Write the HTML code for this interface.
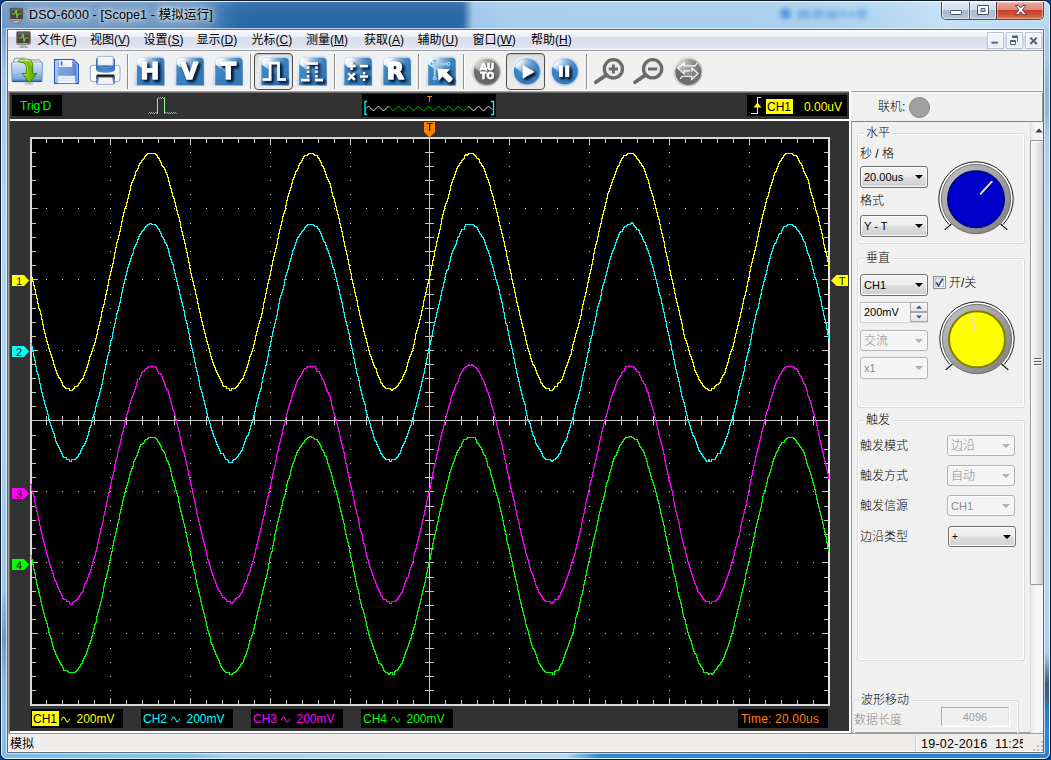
<!DOCTYPE html>
<html lang="zh-CN">
<head>
<meta charset="utf-8">
<title>DSO-6000 - [Scope1 - 模拟运行]</title>
<style>
*{box-sizing:border-box;margin:0;padding:0}
html,body{width:1051px;height:760px;overflow:hidden;background:#0b438f}
body{position:relative;font-family:"Liberation Sans","Noto Sans CJK SC",sans-serif;font-size:12px;color:#000}
div,span,svg{position:absolute}
u{text-underline-offset:1px}
.t{white-space:nowrap;line-height:1}
.ui{font-family:"Liberation Sans","Noto Sans CJK SC",sans-serif;font-size:12px}
.song{font-family:"Liberation Sans","Noto Sans CJK SC",sans-serif;font-size:12px;font-weight:300}
.ar{font-family:"Liberation Sans",sans-serif;font-size:13px}
.tsep{width:2px;height:34px;border-left:1px solid #8e8e8e;border-right:1px solid #fdfdfd}
.combo{border:1px solid #707070;border-radius:3px;background:linear-gradient(180deg,#f3f3f3 0,#ececec 48%,#dedede 52%,#d0d0d0 100%);box-shadow:inset 0 0 0 1px #fcfcfc}
.combo.dis{border-color:#adb2b5;background:#f4f4f4;box-shadow:inset 0 0 0 1px #fcfcfc}
.arrow{width:0;height:0;border-left:4px solid transparent;border-right:4px solid transparent;border-top:4px solid #000}
.arrow.dis{border-top-color:#b0b0b0}
.grp{border:1px solid #d5dfe5;border-radius:3px;box-shadow:inset 0 0 0 1px #fff, 0 0 0 0 #fff}
.grplabel{background:#f0f0f0;padding:0 2px}
</style>
</head>
<body>
<div id="frame" style="left:0;top:0;width:1051px;height:760px;border-radius:7px 7px 6px 6px;background:#0d1828;overflow:hidden">
<div style="left:1px;top:1px;width:1049px;height:758px;border-radius:6px;overflow:hidden;background:linear-gradient(90deg,#7099c4 0,#6e98c3 120px,#6893c0 185px,#5c8bbb 203px,#4a7fb5 214px,#3672ad 225px,#2b69a7 238px,#2866a5 255px,#2866a5 455px,#2b69a8 462px,#9fc8e8 472px,#a9cfec 520px,#abd0ee 800px,#b4d6f1 880px,#c6e0f6 945px,#b8d8f2 100%)">
<div style="left:0;top:27px;width:7px;height:731px;background:linear-gradient(180deg,#7aa3cd 0,#a4c9ec 50px,#b1d3f1 200px,#acd0f0 400px,#9cc6ea 560px,#6f97bd 610px,#8ab4da 650px,#86c1e8 700px,#7cbde6 100%)"></div>
<div style="left:1042px;top:27px;width:7px;height:731px;background:linear-gradient(180deg,#abd0ec 0,#a4cbea 30px,#8fbbe0 50px,#8ab7de 85px,#a9cfee 110px,#b2d5f3 220px,#b4d7f4 560px,#a9cfee 625px,#5d83aa 645px,#3a5c84 655px,#3c628c 668px,#2f7dc0 682px,#2f86cc 700px,#2d84ca 100%)"></div>
<div style="left:0;top:751px;width:1049px;height:7px;background:linear-gradient(90deg,#78bde6 0,#84c4ea 190px,#a6d2f2 225px,#b2d9f6 400px,#b4daf6 565px,#6fb0e2 582px,#3388ce 598px,#2f86cc 700px,#2b81c9 100%)"></div>
<div style="left:0;top:0;width:1049px;height:28px;background:linear-gradient(180deg,rgba(255,255,255,.10) 0,rgba(255,255,255,.02) 40%,rgba(255,255,255,0) 100%)"></div>
<div style="left:0;top:0;width:1049px;height:758px;border-radius:6px;border:1px solid rgba(240,248,255,.92)"></div>
<div style="left:796px;top:8px;width:70px;height:11px;opacity:.72;filter:blur(2px)"><div style="left:0;top:1px;width:13px;height:9px;background:rgba(70,140,215,.62)"></div><div style="left:15px;top:0;width:12px;height:10px;background:rgba(70,140,215,.55)"></div><div style="left:29px;top:1px;width:12px;height:9px;background:rgba(70,140,215,.62)"></div><div style="left:43px;top:1px;width:7px;height:8px;background:rgba(70,140,215,.5)"></div><div style="left:52px;top:2px;width:6px;height:7px;background:rgba(70,140,215,.55)"></div><div style="left:60px;top:0;width:10px;height:10px;background:rgba(70,140,215,.6)"></div></div>
<div style="left:779px;top:7px;width:11px;height:11px;border-radius:5px;background:rgba(50,135,220,.7);filter:blur(1.9px)"></div>
</div>
<div style="left:7px;top:29px;width:1037px;height:724px;border:1px solid #5b6a7b;background:#f0f0f0"></div>
<div style="left:6px;top:28px;width:1039px;height:726px;border:1px solid rgba(235,245,255,.75);border-radius:1px;pointer-events:none"></div>
</div>
<svg style="left:9px;top:7px" width="16" height="17" viewBox="0 0 16 17"><defs><linearGradient id="scr" x1="0" y1="0" x2="0" y2="1"><stop offset="0" stop-color="#6c6c6c"/><stop offset=".5" stop-color="#3a3a3a"/><stop offset="1" stop-color="#4a4a4a"/></linearGradient></defs><rect x="0.5" y="0.5" width="14" height="13" rx="1" fill="#d9d7d4" stroke="#8a8783"/><rect x="1.5" y="1.5" width="12" height="10.5" fill="url(#scr)" stroke="#2a2a2a" stroke-width=".6"/><path d="M2.5 7H5.5L6.3 5.6L7.3 3L8 10.8L8.8 7.6L9.5 7H12.5" fill="none" stroke="#86c232" stroke-width="1.2" stroke-linejoin="round"/><rect x="12" y="12" width="1.3" height="1.2" fill="#e03050"/><path d="M5.5 14H9.5L10 15.5H5Z" fill="#c9c7c4"/><rect x="3.2" y="15.4" width="8.6" height="1.2" rx=".6" fill="#7c7a78"/></svg>
<div class="t" style="left:29px;top:7px;font-size:12.5px;letter-spacing:.12px;line-height:16px;color:#000;text-shadow:0 0 5px #fff,0 0 9px rgba(255,255,255,.85),0 0 14px rgba(255,255,255,.6)">DSO-6000 - [Scope1 - 模拟运行]</div>
<div style="left:941px;top:2px;width:103px;height:18px;border:1px solid #3b4a5c;border-top:none;border-radius:0 0 5px 5px;overflow:hidden;box-shadow:0 0 2px rgba(255,255,255,.7)">
<div style="left:0;top:0;width:27px;height:17px;background:linear-gradient(180deg,#dce9f5 0,#cfdfee 45%,#a8bdd3 50%,#b1c5da 100%);box-shadow:inset 0 0 0 1px rgba(255,255,255,.55)"></div>
<div style="left:27px;top:0;width:1px;height:17px;background:#47576a"></div>
<div style="left:28px;top:0;width:26px;height:17px;background:linear-gradient(180deg,#dce9f5 0,#cfdfee 45%,#a8bdd3 50%,#b1c5da 100%);box-shadow:inset 0 0 0 1px rgba(255,255,255,.55)"></div>
<div style="left:54px;top:0;width:1px;height:17px;background:#5a2a26"></div>
<div style="left:55px;top:0;width:46px;height:17px;background:linear-gradient(180deg,#eaa9a0 0,#de8679 45%,#c5412c 50%,#cf5236 75%,#dd7652 100%);box-shadow:inset 0 0 0 1px rgba(255,220,210,.5)"></div>
</div>
<svg style="left:941px;top:0" width="103" height="20" viewBox="0 0 103 20"><rect x="9.5" y="10.5" width="11" height="4" rx=".8" fill="#fff" stroke="#47556a"/><path d="M36.5 5.500H47.500V14.500H36.500Z M40 8.500V11.500H44V8.500Z" fill="#fff" fill-rule="evenodd" stroke="#47556a"/><path d="M74.300 5.400H77.600L79.700 8.100L81.800 5.400H85.100L81.400 9.900L85.300 14.600H81.900L79.700 11.800L77.500 14.600H74.100L78 9.900Z" fill="#fff" stroke="#5c3832" stroke-width=".9" stroke-linejoin="round"/></svg>
<div style="left:8px;top:30px;width:1035px;height:20px;background:linear-gradient(180deg,#ffffff 0,#f7f8fc 2px,#eaedf7 7px,#d9ddec 7px,#dbdfee 13px,#e3e6f3 18px,#eef0f8 19px,#f5f6fb 20px)"></div>
<div style="left:8px;top:50px;width:1035px;height:1px;background:#a0a0a0"></div>
<svg style="left:16px;top:31px" width="16" height="17" viewBox="0 0 16 17"><defs><linearGradient id="scr" x1="0" y1="0" x2="0" y2="1"><stop offset="0" stop-color="#6c6c6c"/><stop offset=".5" stop-color="#3a3a3a"/><stop offset="1" stop-color="#4a4a4a"/></linearGradient></defs><rect x="0.5" y="0.5" width="14" height="13" rx="1" fill="#d9d7d4" stroke="#8a8783"/><rect x="1.5" y="1.5" width="12" height="10.5" fill="url(#scr)" stroke="#2a2a2a" stroke-width=".6"/><path d="M2.5 7H5.5L6.3 5.6L7.3 3L8 10.8L8.8 7.6L9.5 7H12.5" fill="none" stroke="#86c232" stroke-width="1.2" stroke-linejoin="round"/><rect x="12" y="12" width="1.3" height="1.2" fill="#e03050"/><path d="M5.5 14H9.5L10 15.5H5Z" fill="#c9c7c4"/><rect x="3.2" y="15.4" width="8.6" height="1.2" rx=".6" fill="#7c7a78"/></svg>
<div class="t ui" style="left:37.5px;top:32px;line-height:16px">文件(<u>F</u>)</div>
<div class="t ui" style="left:90px;top:32px;line-height:16px">视图(<u>V</u>)</div>
<div class="t ui" style="left:143.5px;top:32px;line-height:16px">设置(<u>S</u>)</div>
<div class="t ui" style="left:196.5px;top:32px;line-height:16px">显示(<u>D</u>)</div>
<div class="t ui" style="left:251.5px;top:32px;line-height:16px">光标(<u>C</u>)</div>
<div class="t ui" style="left:306px;top:32px;line-height:16px">测量(<u>M</u>)</div>
<div class="t ui" style="left:364px;top:32px;line-height:16px">获取(<u>A</u>)</div>
<div class="t ui" style="left:417.5px;top:32px;line-height:16px">辅助(<u>U</u>)</div>
<div class="t ui" style="left:472.5px;top:32px;line-height:16px">窗口(<u>W</u>)</div>
<div class="t ui" style="left:531px;top:32px;line-height:16px">帮助(<u>H</u>)</div>
<div style="left:987px;top:32px;width:17px;height:17px;border:1px solid #b5c4d8;background:linear-gradient(180deg,#f3f7fb 0,#e3ebf5 100%);box-shadow:inset 0 0 0 1px rgba(255,255,255,.7)"></div>
<div style="left:1005.5px;top:32px;width:17px;height:17px;border:1px solid #b5c4d8;background:linear-gradient(180deg,#f3f7fb 0,#e3ebf5 100%);box-shadow:inset 0 0 0 1px rgba(255,255,255,.7)"></div>
<div style="left:1024.5px;top:32px;width:17px;height:17px;border:1px solid #b5c4d8;background:linear-gradient(180deg,#f3f7fb 0,#e3ebf5 100%);box-shadow:inset 0 0 0 1px rgba(255,255,255,.7)"></div>
<svg style="left:987px;top:32px" width="56" height="17" viewBox="0 0 56 17"><rect x="4.500" y="9.700" width="6.300" height="1.900" fill="#566173"/><path d="M25.5 5.500H30.500V9.500M23.500 8.500H28.500V12.500H23.500Z M23.500 9.500H28.500" fill="none" stroke="#566173" stroke-width="1"/><path d="M25 4.500H31" stroke="#566173" stroke-width="2"/><path d="M43.300 5.600L49.800 12M49.800 5.600L43.300 12" stroke="#566173" stroke-width="2"/></svg>
<div style="left:8px;top:51px;width:1035px;height:39px;background:#f0f0f0"></div>
<div style="left:8px;top:90px;width:1035px;height:1px;background:#f9f9f9"></div>
<div style="left:254px;top:53px;width:39px;height:37px;border:1px solid #4f4f4f;border-radius:4px;background:linear-gradient(180deg,#dcdcdc 0,#e6e6e6 40%,#ebebeb 100%);box-shadow:inset 0 1px 1px rgba(0,0,0,.12)"></div>
<div style="left:506px;top:53px;width:39px;height:37px;border:1px solid #4f4f4f;border-radius:4px;background:linear-gradient(180deg,#dcdcdc 0,#e6e6e6 40%,#ebebeb 100%);box-shadow:inset 0 1px 1px rgba(0,0,0,.12)"></div>
<div class="tsep" style="left:127px;top:54px;width:2px;height:35px;"></div>
<div class="tsep" style="left:250px;top:54px;width:2px;height:35px;"></div>
<div class="tsep" style="left:334px;top:54px;width:2px;height:35px;"></div>
<div class="tsep" style="left:418px;top:54px;width:2px;height:35px;"></div>
<div class="tsep" style="left:463px;top:54px;width:2px;height:35px;"></div>
<div class="tsep" style="left:586px;top:54px;width:2px;height:35px;"></div>
<svg style="left:8px;top:51px" width="1035" height="40" viewBox="8 51 1035 40">
<defs>
<linearGradient id="tb" x1="0" y1="0" x2="1" y2="1"><stop offset="0" stop-color="#4a8fca"/><stop offset=".5" stop-color="#3a80bd"/><stop offset="1" stop-color="#2f72ae"/></linearGradient>
<linearGradient id="tg" x1="0" y1="0" x2=".9" y2=".8"><stop offset="0" stop-color="#fff" stop-opacity=".98"/><stop offset=".35" stop-color="#dcebf7" stop-opacity=".85"/><stop offset=".8" stop-color="#7db0db" stop-opacity=".55"/><stop offset="1" stop-color="#4a8dc8" stop-opacity=".2"/></linearGradient>
<radialGradient id="cb" cx=".45" cy=".4" r=".7"><stop offset="0" stop-color="#3f8ccc"/><stop offset=".7" stop-color="#3a80bd"/><stop offset="1" stop-color="#2c6ca6"/></radialGradient>
<radialGradient id="cg" cx=".5" cy=".45" r=".7"><stop offset="0" stop-color="#7a7a7a"/><stop offset=".7" stop-color="#6a6a6a"/><stop offset="1" stop-color="#585858"/></radialGradient>
<linearGradient id="cgl" x1="0" y1="0" x2=".8" y2=".9"><stop offset="0" stop-color="#fff" stop-opacity=".95"/><stop offset=".6" stop-color="#d6d6d6" stop-opacity=".7"/><stop offset="1" stop-color="#999" stop-opacity=".3"/></linearGradient>
<filter id="ds" x="-30%" y="-30%" width="170%" height="170%">
 <feGaussianBlur in="SourceAlpha" stdDeviation="1.5" result="b"/><feOffset in="b" dx="2.1" dy="2.2" result="o"/><feFlood flood-color="#031c3a" flood-opacity="1"/><feComposite in2="o" operator="in" result="sh"/><feMerge><feMergeNode in="sh"/><feMergeNode in="sh"/><feMergeNode in="SourceGraphic"/></feMerge></filter>
<filter id="dg" x="-30%" y="-30%" width="170%" height="170%"><feGaussianBlur in="SourceAlpha" stdDeviation=".9" result="b"/><feOffset in="b" dx="1.2" dy="1.4" result="o"/><feFlood flood-color="#222" flood-opacity=".7"/><feComposite in2="o" operator="in" result="sh"/><feMerge><feMergeNode in="sh"/><feMergeNode in="SourceGraphic"/></feMerge></filter>
<filter id="soft"><feGaussianBlur stdDeviation=".5"/></filter>
<linearGradient id="bev" x1="0" y1="0" x2="1" y2="1"><stop offset="0" stop-color="#f4f7fc"/><stop offset=".45" stop-color="#cfdcf0"/><stop offset="1" stop-color="#8fb2dc"/></linearGradient>
<radialGradient id="gl" gradientUnits="userSpaceOnUse" cx="3" cy="3" r="24"><stop offset="0" stop-color="#fff" stop-opacity="1"/><stop offset=".3" stop-color="#fff" stop-opacity=".88"/><stop offset=".62" stop-color="#cfe2f4" stop-opacity=".45"/><stop offset="1" stop-color="#9cc4e8" stop-opacity="0"/></radialGradient>
<radialGradient id="glg" gradientUnits="userSpaceOnUse" cx="4" cy="3" r="26"><stop offset="0" stop-color="#fff" stop-opacity=".9"/><stop offset=".3" stop-color="#f4f4f4" stop-opacity=".62"/><stop offset=".62" stop-color="#d0d0d0" stop-opacity=".38"/><stop offset="1" stop-color="#aaa" stop-opacity=".12"/></radialGradient>
<g id="tile">
 <path d="M0 5.500Q0 .3 5.500 .2H25.200Q30.700 .3 30.700 5.500V31H0Z" fill="#f3f0e0" opacity=".6" filter="url(#soft)"/>
 <path d="M.2 5.700Q.2 .6 5.600 .5H25.100Q30.500 .6 30.500 5.700V30.800H.2Z" fill="url(#bev)"/>
 <path d="M2.600 7Q2.600 2.800 7 2.700H25.500Q30 2.800 30 6.500V30.300H2.600Z" fill="url(#tb)"/>
 <path d="M2.600 9.300V7Q2.600 2.800 7 2.700H25.500Q29 2.800 29.800 5L30 16L22.500 24.500Z" fill="url(#gl)"/>
</g>
<g id="ball">
 <circle cx="15" cy="15" r="15" fill="#f1eedc" opacity=".7" filter="url(#soft)"/>
 <circle cx="15" cy="15" r="14.700" fill="url(#bev)"/>
 <circle cx="15.400" cy="15.400" r="12.900" fill="url(#cb)"/>
 <path d="M2.400 10.500A12.900 12.900 0 0 1 28 12L25 25L21 24.500Z" fill="url(#gl)" clip-path="url(#bclip)"/>
</g>
<g id="gball">
 <circle cx="15" cy="15" r="15" fill="#e2e2e2" filter="url(#soft)"/>
 <circle cx="15" cy="15" r="14.700" fill="url(#gbev)"/>
 <circle cx="15.400" cy="15.400" r="12.900" fill="url(#cg)"/>
 <path d="M2.400 10.500A12.900 12.900 0 0 1 28 12L25 25L21 24.500Z" fill="url(#glg)" clip-path="url(#bclip)"/>
</g>
<clipPath id="bclip"><circle cx="15.400" cy="15.400" r="12.900"/></clipPath>
<linearGradient id="gbev" x1="0" y1="0" x2="1" y2="1"><stop offset="0" stop-color="#f2f2f2"/><stop offset=".5" stop-color="#c9c9c9"/><stop offset="1" stop-color="#a6a6a6"/></linearGradient>
</defs>
<g>
<defs><linearGradient id="fo" x1="0" y1="0" x2="0" y2="1"><stop offset="0" stop-color="#cfe0f5"/><stop offset=".45" stop-color="#a4c4ec"/><stop offset=".8" stop-color="#6c9fdb"/><stop offset="1" stop-color="#4d86c9"/></linearGradient>
<linearGradient id="ga" x1="0" y1="0" x2="1" y2="0"><stop offset="0" stop-color="#a6d62a"/><stop offset=".45" stop-color="#86c40f"/><stop offset="1" stop-color="#5a9e04"/></linearGradient>
<linearGradient id="gb" x1="0" y1="0" x2="0" y2="1"><stop offset="0" stop-color="#d8ee7a"/><stop offset=".5" stop-color="#a8d630" stop-opacity=".6"/><stop offset="1" stop-color="#7cb80c" stop-opacity="0"/></linearGradient></defs>
<ellipse cx="29" cy="83.500" rx="5" ry="1.600" fill="#8a8a6a" opacity=".35" filter="url(#soft)"/>
<path d="M13.300 62.500L14.400 58.800Q14.600 58.200 15.300 58.200H24.300Q25 58.200 25.300 58.800L25.900 60H39.300Q40.100 60 40.300 60.700L41 62.500Z" fill="#f3f3f3" stroke="#808080" stroke-width=".9"/>
<path d="M12.300 62.300H41.700Q42.500 62.300 42.500 63.100L42 80.600Q41.900 81.700 40.800 81.700H13.200Q12.100 81.700 12 80.600L11.500 63.100Q11.500 62.300 12.300 62.300Z" fill="url(#fo)" stroke="#5f8cc4" stroke-width=".8"/>
<path d="M12.600 63H41.400" stroke="#fff" stroke-opacity=".8" stroke-width=".8"/>
<path d="M12.200 81.300H41.800" stroke="#1f4d86" stroke-width="1"/>
<path d="M13 65H41M13 66.700H41M13 68.400H41M13 70.100H41M13 71.800H41M13 73.500H41M13 75.200H41M13 76.900H41M13 78.600H41" stroke="#fff" stroke-opacity=".22" stroke-width=".8"/>
<path d="M18.400 61.600Q18.200 60.200 19.800 59.800Q23 59 27.500 59.200Q32.600 59.800 32.700 65.500V73.500H37L29.500 82.500L22 73.500H26.400V67.500Q26.300 63.300 22 62.300Q19.600 62 18.400 61.600Z" fill="url(#ga)" stroke="#3b7d02" stroke-width=".9" stroke-linejoin="round"/>
<path d="M19.500 60.800Q25 59.600 28.500 60.400Q31.300 61.300 31.500 65.500V69" fill="none" stroke="url(#gb)" stroke-width="1.500"/>
<path d="M23.800 74.300H27.300V67.500Q27.200 65.500 26.200 64.300" fill="none" stroke="#c8e860" stroke-opacity=".75" stroke-width=".8"/>
</g>
<g transform="translate(54,59)">
<defs><linearGradient id="fl" x1="0" y1="0" x2="1" y2="1"><stop offset="0" stop-color="#8fb0e6"/><stop offset="1" stop-color="#5f8bd4"/></linearGradient></defs>
<path d="M.6 .6H19.500L24.400 5.500V24.400H.6Z" fill="url(#fl)" stroke="#1f5cc0" stroke-width="1.200" stroke-linejoin="round"/>
<path d="M1.800 1.800H19L23.200 6V23.200H1.800Z" fill="none" stroke="#dfe9fb" stroke-opacity=".85" stroke-width=".9"/><path d="M19 2.500H19.200L22.700 6V22.700H19Z" fill="#4a74c4" opacity=".45"/><path d="M2.300 2.300H4V22.700H2.300Z" fill="#b4ccf4" opacity=".7"/>
<path d="M5 1.200H18V8H5Z" fill="#e6eefb"/>
<path d="M5 1.200H18V8Z" fill="#fff" opacity=".6"/>
<rect x="6.800" y="2.300" width="1.600" height="4.200" fill="#3b6fcc"/>
<path d="M4.200 17H21V24H4.200Z" fill="#f4f8ff" stroke="#cfdcf4" stroke-width=".6"/>
<path d="M5.500 19.300H19.800M5.500 21.300H19.800" stroke="#bcd0f2" stroke-width=".8"/>
</g>
<g>
<defs><linearGradient id="pb" x1="0" y1="0" x2="0" y2="1"><stop offset="0" stop-color="#3f7fc6"/><stop offset=".55" stop-color="#2f6cb5"/><stop offset="1" stop-color="#5a92d2"/></linearGradient></defs>
<path d="M92.800 65.300Q90.300 65.300 90.300 68V78.600Q90.300 81.600 93.300 81.600H117Q120 81.600 120 78.600V68Q120 65.300 117.500 65.300Z" fill="#fbfcfe" stroke="#6f94c4" stroke-width=".8"/>
<path d="M96 70V59.500Q96 58.300 97.200 58.300H98V65H112.800V58.300H113.800Q115 58.300 115 59.500V70Q114 72.600 105.500 72.700Q97 72.600 96 70Z" fill="url(#pb)"/>
<path d="M97.600 65.400V57.200Q97.600 56.300 98.500 56.300H112.300Q113.200 56.300 113.200 57.200V65.400Z" fill="#f6f5f4" stroke="#7ea2d0" stroke-width=".8"/>
<path d="M98.500 66.800Q105.500 69 112.500 66.800" fill="none" stroke="#7fb0e4" stroke-opacity=".6" stroke-width="1.200"/>
<path d="M97.300 74.500H113.700Q114.400 74.500 114.500 75.300L115 79H96L96.500 75.300Q96.600 74.500 97.300 74.500Z" fill="#1e1e1e"/>
<path d="M96.600 76.500L98.600 77L97.600 83.600H95.900Z M114.400 76.500L112.400 77L113.400 83.600H115.100Z" fill="#3a78c0"/>
<path d="M98.700 77.300H112.300L113.800 84.400H97.200Z" fill="#f3f2f1" stroke="#7ea2d0" stroke-width=".8" stroke-linejoin="round"/>
</g>
<use href="#tile" x="134.3" y="55"/>
<text x="149.9" y="78.9" text-anchor="middle" font-family="DejaVu Sans,Liberation Sans,sans-serif" font-weight="bold" font-size="22.8" fill="#fff" stroke="#fff" stroke-width="0.8" stroke-linejoin="round" filter="url(#ds)">H</text>
<use href="#tile" x="173.8" y="55"/>
<text x="189.4" y="78.9" text-anchor="middle" font-family="DejaVu Sans,Liberation Sans,sans-serif" font-weight="bold" font-size="22.8" fill="#fff" stroke="#fff" stroke-width="0.8" stroke-linejoin="round" filter="url(#ds)">V</text>
<use href="#tile" x="212.6" y="55"/>
<text x="228.2" y="78.9" text-anchor="middle" font-family="DejaVu Sans,Liberation Sans,sans-serif" font-weight="bold" font-size="22.8" fill="#fff" stroke="#fff" stroke-width="0.8" stroke-linejoin="round" filter="url(#ds)">T</text>
<use href="#tile" x="258.8" y="55"/>
<path d="M262.500 79.500H270V63H278.500V79.500H286" fill="none" stroke="#fff" stroke-width="2.500" filter="url(#ds)"/>
<use href="#tile" x="296.6" y="55"/>
<g filter="url(#ds)" stroke="#fff" fill="none"><path d="M306.500 63.500H318M301 80H309.500M315 80H323" stroke-width="2.400"/><path d="M308 66.500V78M316.500 66.500V78" stroke-width="2.400" stroke-dasharray="2.300 2"/></g>
<use href="#tile" x="341.8" y="55"/>
<g transform="translate(-.5,-.5)" filter="url(#ds)" stroke="#fff" stroke-width="2.300" fill="none"><path d="M348 66.500H356M352 62.500V70.500"/><path d="M360.500 66.500H368.500"/><path d="M348.800 73.800L355.200 80.200M355.200 73.800L348.800 80.200"/><path d="M360.500 77H368.500"/><path d="M364.500 72.600V74.700M364.500 79.300V81.400" stroke-width="2.200"/></g>
<use href="#tile" x="380.8" y="55"/>
<text x="395.2" y="78.9" text-anchor="middle" font-family="DejaVu Sans,Liberation Sans,sans-serif" font-weight="bold" font-size="22.8" fill="#fff" stroke="#fff" stroke-width="1.2" stroke-linejoin="round" filter="url(#ds)">R</text>
<use href="#tile" x="425.6" y="55"/>
<g fill="none" stroke="#a6cfe8" stroke-width="2"><path d="M432.500 63.800H447.500M434.700 61.500V77.500"/></g><g fill="#3f86c2" stroke="#b4d8ee" stroke-width="1.100"><rect x="430.300" y="62.400" width="2.600" height="2.900" rx="1.200"/><rect x="447.200" y="62.200" width="2.600" height="3.300" rx="1.200"/><rect x="433" y="59.600" width="3.400" height="2.500" rx="1.200"/><rect x="433" y="77.300" width="3.400" height="2.500" rx="1.200"/></g>
<path d="M437.500 68.800L449.800 69.300L446.600 72.400L452.200 78Q452.900 79.400 451.300 81Q449.800 82.600 448.400 82L442.600 76.200L438.600 80.800Z" fill="#fff" filter="url(#ds)"/>
<use href="#gball" x="471.200" y="56.400"/>
<g font-family="DejaVu Sans,Liberation Sans,sans-serif" font-weight="bold" font-size="9.200" fill="#fff" stroke="#fff" stroke-width=".55" text-anchor="middle" filter="url(#dg)"><text x="487" y="70">AU</text><text x="487.200" y="79.100">TO</text></g>
<use href="#ball" x="511.400" y="56"/>
<path d="M523 65.500L534 71.800L523 78Z" fill="#fff" stroke="#fff" stroke-width=".6" stroke-linejoin="round" filter="url(#ds)"/>
<use href="#ball" x="549.300" y="56"/>
<path d="M559 65.500H562.800V77H559ZM565.300 65.500H569.100V77H565.300Z" fill="#fff" filter="url(#ds)"/>
<g stroke="#6b6b6b" fill="none" stroke-linecap="round"><circle cx="613.4" cy="68.800" r="9.100" stroke-width="3.300" fill="#ebebeb"/><path d="M605.8 75.39999999999999L595.8 82.2" stroke-width="3.800"/><path d="M608.8 69H618.0M613.4 64.400V73.600" stroke-width="3" stroke-linecap="butt"/></g>
<g stroke="#6b6b6b" fill="none" stroke-linecap="round"><circle cx="652.6" cy="68.800" r="9.100" stroke-width="3.300" fill="#ebebeb"/><path d="M645.0 75.39999999999999L635.0 82.2" stroke-width="3.800"/><path d="M648.0 69H657.2" stroke-width="3" stroke-linecap="butt"/></g>
<use href="#gball" x="672.800" y="56.600"/>
<g fill="none" stroke="#fff" stroke-width="1.150" stroke-linejoin="miter" stroke-linecap="round"><path d="M696.800 63.500L695.300 65.800H684.300V62.800L678 68.300L684 73.800V70.800H690"/><path d="M680.500 78.300L682.500 76.200H691.800V79.400L698 73.500L692 68V71.200"/></g>
</svg>
<div style="left:8px;top:91px;width:1035px;height:642px;background:#a0a0a0"></div>
<div style="left:9px;top:92px;width:1033px;height:640px;background:#696969"></div>
<div style="left:10px;top:93px;width:1032px;height:639px;background:#f0f0f0"></div>
<div style="left:10px;top:93px;width:839px;height:638px;background:#323232"></div>
<div style="left:10px;top:731px;width:839px;height:2px;background:#ffffff"></div>
<div style="left:12px;top:95px;width:50px;height:21px;background:#000"></div>
<div class="t ar" style="left:20px;top:99px;line-height:15px;color:#00ff00;font-size:12px">Trig'D</div>
<div style="left:10px;top:119px;width:839px;height:2px;background:#ffffff"></div>
<div style="left:362px;top:94px;width:134px;height:23px;background:#000"></div>
<div style="left:747px;top:95px;width:100px;height:21px;background:#000"></div>
<svg style="left:10px;top:93px" width="839" height="45" viewBox="10 93 839 45" shape-rendering="crispEdges"><path d="M148.500 113.500L149.5 112.5L150.5 113.5L151.5 112.5L152.5 113.5L153.5 112.5L154.5 113.5L155.5 112.5L157.500 113.500V98.500L158.5 97.5L159.5 98.5L160.5 97.5L161.5 98.5L162.5 97.5L163.5 98.5L164.5 97.5V113.500L165.5 112.5L166.5 113.5L167.5 112.5L168.5 113.5L169.5 112.5L170.5 113.5L171.5 112.5L172.5 113.5L173.5 112.5L174.5 113.5L175.5 112.5L176.5 113.5" fill="none" stroke="#80ff80" stroke-width="1" shape-rendering="auto"/><path d="M367 101.500H365V114.500H367" fill="none" stroke="#00ffff" stroke-width="1.300" shape-rendering="auto"/><path d="M491 101.500H493.500V114.500H491" fill="none" stroke="#00ffff" stroke-width="1.300" shape-rendering="auto"/><path d="M366.0 108.5L366.5 108.0L367.0 107.5L367.5 107.0L368.0 106.5L368.5 106.0L369.0 106.5L369.5 107.0L370.0 107.5L370.5 108.0L371.0 108.5L371.5 109.0L372.0 109.5L372.5 110.0L373.0 110.5L373.5 111.0L374.0 110.5L374.5 110.0L375.0 109.5L375.5 109.0L376.0 108.5L376.5 108.0L377.0 107.5L377.5 107.0L378.0 106.5L378.5 106.0L379.0 106.5L379.5 107.0L380.0 107.5L380.5 108.0L381.0 108.5L381.5 109.0L382.0 109.5L382.5 110.0L383.0 110.5L383.5 111.0L384.0 110.5L384.5 110.0L385.0 109.5L385.5 109.0L386.0 108.5L386.5 108.0L387.0 107.5L387.5 107.0L388.0 106.5L388.5 106.0" fill="none" stroke="#fff" stroke-width="1" shape-rendering="auto"/><path d="M388.5 106.0L389.0 106.5L389.5 107.0L390.0 107.5L390.5 108.0L391.0 108.5L391.5 109.0L392.0 109.5L392.5 110.0L393.0 110.5L393.5 111.0L394.0 110.5L394.5 110.0L395.0 109.5L395.5 109.0L396.0 108.5L396.5 108.0L397.0 107.5L397.5 107.0L398.0 106.5L398.5 106.0L399.0 106.5L399.5 107.0L400.0 107.5L400.5 108.0L401.0 108.5L401.5 109.0L402.0 109.5L402.5 110.0L403.0 110.5L403.5 111.0L404.0 110.5L404.5 110.0L405.0 109.5L405.5 109.0L406.0 108.5L406.5 108.0L407.0 107.5L407.5 107.0L408.0 106.5L408.5 106.0L409.0 106.5L409.5 107.0L410.0 107.5L410.5 108.0L411.0 108.5L411.5 109.0L412.0 109.5L412.5 110.0L413.0 110.5L413.5 111.0L414.0 110.5L414.5 110.0L415.0 109.5L415.5 109.0L416.0 108.5L416.5 108.0L417.0 107.5L417.5 107.0L418.0 106.5L418.5 106.0L419.0 106.5L419.5 107.0L420.0 107.5L420.5 108.0L421.0 108.5L421.5 109.0L422.0 109.5L422.5 110.0L423.0 110.5L423.5 111.0L424.0 110.5L424.5 110.0L425.0 109.5L425.5 109.0L426.0 108.5L426.5 108.0L427.0 107.5L427.5 107.0L428.0 106.5L428.5 106.0L429.0 106.5L429.5 107.0L430.0 107.5L430.5 108.0L431.0 108.5L431.5 109.0L432.0 109.5L432.5 110.0L433.0 110.5L433.5 111.0L434.0 110.5L434.5 110.0L435.0 109.5L435.5 109.0L436.0 108.5L436.5 108.0L437.0 107.5L437.5 107.0L438.0 106.5L438.5 106.0L439.0 106.5L439.5 107.0L440.0 107.5L440.5 108.0L441.0 108.5L441.5 109.0L442.0 109.5L442.5 110.0L443.0 110.5L443.5 111.0L444.0 110.5L444.5 110.0L445.0 109.5L445.5 109.0L446.0 108.5L446.5 108.0L447.0 107.5L447.5 107.0L448.0 106.5L448.5 106.0L449.0 106.5L449.5 107.0L450.0 107.5L450.5 108.0L451.0 108.5L451.5 109.0L452.0 109.5L452.5 110.0L453.0 110.5L453.5 111.0L454.0 110.5L454.5 110.0L455.0 109.5L455.5 109.0L456.0 108.5L456.5 108.0L457.0 107.5L457.5 107.0L458.0 106.5L458.5 106.0L459.0 106.5L459.5 107.0L460.0 107.5L460.5 108.0L461.0 108.5L461.5 109.0L462.0 109.5L462.5 110.0L463.0 110.5L463.5 111.0L464.0 110.5L464.5 110.0L465.0 109.5L465.5 109.0L466.0 108.5L466.5 108.0L467.0 107.5L467.5 107.0L468.0 106.5L468.5 106.0" fill="none" stroke="#00e000" stroke-width="1" shape-rendering="auto"/><path d="M468.5 106.0L469.0 106.5L469.5 107.0L470.0 107.5L470.5 108.0L471.0 108.5L471.5 109.0L472.0 109.5L472.5 110.0L473.0 110.5L473.5 111.0L474.0 110.5L474.5 110.0L475.0 109.5L475.5 109.0L476.0 108.5L476.5 108.0L477.0 107.5L477.5 107.0L478.0 106.5L478.5 106.0L479.0 106.5L479.5 107.0L480.0 107.5L480.5 108.0L481.0 108.5L481.5 109.0L482.0 109.5L482.5 110.0L483.0 110.5L483.5 111.0L484.0 110.5L484.5 110.0L485.0 109.5L485.5 109.0L486.0 108.5L486.5 108.0L487.0 107.5L487.5 107.0L488.0 106.5L488.5 106.0L489.0 106.5L489.5 107.0L490.0 107.5L490.5 108.0L491.0 108.5L491.5 109.0L492.0 109.5" fill="none" stroke="#fff" stroke-width="1" shape-rendering="auto"/><path d="M427 96.500H432M429.500 96.500V102" fill="none" stroke="#ff8000" stroke-width="1"/><path d="M751 113.500H757.500V97.500H761" fill="none" stroke="#ffff00" stroke-width="1.200"/><path d="M757.500 102.500L753.500 107.500H761.500Z" fill="#ffff00" shape-rendering="auto"/><path d="M424 122H435V132L429.500 137.500L424 132Z" fill="#ff8000" shape-rendering="auto"/></svg>
<div class="t ar" style="left:424px;top:122px;width:11px;text-align:center;line-height:11px;font-size:11px;color:#000">T</div>
<div style="left:766px;top:99px;width:27px;height:15px;background:#ffff00"></div>
<div class="t ar" style="left:767px;top:100px;line-height:15px;color:#000;font-size:12px">CH1</div>
<div class="t ar" style="left:804px;top:100px;line-height:15px;color:#ffff00;font-size:12px">0.00uV</div>
<div style="left:30px;top:137px;width:800px;height:569px;background:#000;border:2px solid #d8d8d8;border-right-color:#e4e4e4"></div>
<svg style="left:30px;top:137px" width="800" height="569" viewBox="30 137 800 569" shape-rendering="crispEdges"><path d="M46 139h1v4h-1zM46 700h1v4h-1zM62 139h1v4h-1zM62 700h1v4h-1zM78 139h1v4h-1zM78 700h1v4h-1zM94 139h1v4h-1zM94 700h1v4h-1zM110 139h1v6h-1zM110 698h1v6h-1zM126 139h1v4h-1zM126 700h1v4h-1zM142 139h1v4h-1zM142 700h1v4h-1zM158 139h1v4h-1zM158 700h1v4h-1zM174 139h1v4h-1zM174 700h1v4h-1zM190 139h1v6h-1zM190 698h1v6h-1zM206 139h1v4h-1zM206 700h1v4h-1zM222 139h1v4h-1zM222 700h1v4h-1zM238 139h1v4h-1zM238 700h1v4h-1zM254 139h1v4h-1zM254 700h1v4h-1zM270 139h1v6h-1zM270 698h1v6h-1zM286 139h1v4h-1zM286 700h1v4h-1zM302 139h1v4h-1zM302 700h1v4h-1zM318 139h1v4h-1zM318 700h1v4h-1zM334 139h1v4h-1zM334 700h1v4h-1zM350 139h1v6h-1zM350 698h1v6h-1zM366 139h1v4h-1zM366 700h1v4h-1zM382 139h1v4h-1zM382 700h1v4h-1zM397 139h1v4h-1zM397 700h1v4h-1zM413 139h1v4h-1zM413 700h1v4h-1zM429 139h1v6h-1zM429 698h1v6h-1zM445 139h1v4h-1zM445 700h1v4h-1zM461 139h1v4h-1zM461 700h1v4h-1zM477 139h1v4h-1zM477 700h1v4h-1zM493 139h1v4h-1zM493 700h1v4h-1zM509 139h1v6h-1zM509 698h1v6h-1zM525 139h1v4h-1zM525 700h1v4h-1zM541 139h1v4h-1zM541 700h1v4h-1zM557 139h1v4h-1zM557 700h1v4h-1zM573 139h1v4h-1zM573 700h1v4h-1zM589 139h1v6h-1zM589 698h1v6h-1zM605 139h1v4h-1zM605 700h1v4h-1zM621 139h1v4h-1zM621 700h1v4h-1zM637 139h1v4h-1zM637 700h1v4h-1zM653 139h1v4h-1zM653 700h1v4h-1zM669 139h1v6h-1zM669 698h1v6h-1zM685 139h1v4h-1zM685 700h1v4h-1zM701 139h1v4h-1zM701 700h1v4h-1zM717 139h1v4h-1zM717 700h1v4h-1zM733 139h1v4h-1zM733 700h1v4h-1zM749 139h1v6h-1zM749 698h1v6h-1zM765 139h1v4h-1zM765 700h1v4h-1zM781 139h1v4h-1zM781 700h1v4h-1zM797 139h1v4h-1zM797 700h1v4h-1zM813 139h1v4h-1zM813 700h1v4h-1zM32 152h4v1h-4zM824 152h4v1h-4zM32 166h4v1h-4zM824 166h4v1h-4zM32 180h4v1h-4zM824 180h4v1h-4zM32 194h4v1h-4zM824 194h4v1h-4zM32 208h6v1h-6zM822 208h6v1h-6zM32 223h4v1h-4zM824 223h4v1h-4zM32 237h4v1h-4zM824 237h4v1h-4zM32 251h4v1h-4zM824 251h4v1h-4zM32 265h4v1h-4zM824 265h4v1h-4zM32 279h6v1h-6zM822 279h6v1h-6zM32 294h4v1h-4zM824 294h4v1h-4zM32 308h4v1h-4zM824 308h4v1h-4zM32 322h4v1h-4zM824 322h4v1h-4zM32 336h4v1h-4zM824 336h4v1h-4zM32 350h6v1h-6zM822 350h6v1h-6zM32 364h4v1h-4zM824 364h4v1h-4zM32 378h4v1h-4zM824 378h4v1h-4zM32 392h4v1h-4zM824 392h4v1h-4zM32 406h4v1h-4zM824 406h4v1h-4zM32 420h6v1h-6zM822 420h6v1h-6zM32 435h4v1h-4zM824 435h4v1h-4zM32 449h4v1h-4zM824 449h4v1h-4zM32 463h4v1h-4zM824 463h4v1h-4zM32 477h4v1h-4zM824 477h4v1h-4zM32 491h6v1h-6zM822 491h6v1h-6zM32 506h4v1h-4zM824 506h4v1h-4zM32 520h4v1h-4zM824 520h4v1h-4zM32 534h4v1h-4zM824 534h4v1h-4zM32 548h4v1h-4zM824 548h4v1h-4zM32 562h6v1h-6zM822 562h6v1h-6zM32 577h4v1h-4zM824 577h4v1h-4zM32 591h4v1h-4zM824 591h4v1h-4zM32 605h4v1h-4zM824 605h4v1h-4zM32 619h4v1h-4zM824 619h4v1h-4zM32 633h6v1h-6zM822 633h6v1h-6zM32 648h4v1h-4zM824 648h4v1h-4zM32 662h4v1h-4zM824 662h4v1h-4zM32 676h4v1h-4zM824 676h4v1h-4zM32 690h4v1h-4zM824 690h4v1h-4zM110 152h1v1h-1zM110 166h1v1h-1zM110 180h1v1h-1zM110 194h1v1h-1zM110 208h1v1h-1zM110 223h1v1h-1zM110 237h1v1h-1zM110 251h1v1h-1zM110 265h1v1h-1zM110 279h1v1h-1zM110 294h1v1h-1zM110 308h1v1h-1zM110 322h1v1h-1zM110 336h1v1h-1zM110 350h1v1h-1zM110 364h1v1h-1zM110 378h1v1h-1zM110 392h1v1h-1zM110 406h1v1h-1zM110 420h1v1h-1zM110 435h1v1h-1zM110 449h1v1h-1zM110 463h1v1h-1zM110 477h1v1h-1zM110 491h1v1h-1zM110 506h1v1h-1zM110 520h1v1h-1zM110 534h1v1h-1zM110 548h1v1h-1zM110 562h1v1h-1zM110 577h1v1h-1zM110 591h1v1h-1zM110 605h1v1h-1zM110 619h1v1h-1zM110 633h1v1h-1zM110 648h1v1h-1zM110 662h1v1h-1zM110 676h1v1h-1zM110 690h1v1h-1zM190 152h1v1h-1zM190 166h1v1h-1zM190 180h1v1h-1zM190 194h1v1h-1zM190 208h1v1h-1zM190 223h1v1h-1zM190 237h1v1h-1zM190 251h1v1h-1zM190 265h1v1h-1zM190 279h1v1h-1zM190 294h1v1h-1zM190 308h1v1h-1zM190 322h1v1h-1zM190 336h1v1h-1zM190 350h1v1h-1zM190 364h1v1h-1zM190 378h1v1h-1zM190 392h1v1h-1zM190 406h1v1h-1zM190 420h1v1h-1zM190 435h1v1h-1zM190 449h1v1h-1zM190 463h1v1h-1zM190 477h1v1h-1zM190 491h1v1h-1zM190 506h1v1h-1zM190 520h1v1h-1zM190 534h1v1h-1zM190 548h1v1h-1zM190 562h1v1h-1zM190 577h1v1h-1zM190 591h1v1h-1zM190 605h1v1h-1zM190 619h1v1h-1zM190 633h1v1h-1zM190 648h1v1h-1zM190 662h1v1h-1zM190 676h1v1h-1zM190 690h1v1h-1zM270 152h1v1h-1zM270 166h1v1h-1zM270 180h1v1h-1zM270 194h1v1h-1zM270 208h1v1h-1zM270 223h1v1h-1zM270 237h1v1h-1zM270 251h1v1h-1zM270 265h1v1h-1zM270 279h1v1h-1zM270 294h1v1h-1zM270 308h1v1h-1zM270 322h1v1h-1zM270 336h1v1h-1zM270 350h1v1h-1zM270 364h1v1h-1zM270 378h1v1h-1zM270 392h1v1h-1zM270 406h1v1h-1zM270 420h1v1h-1zM270 435h1v1h-1zM270 449h1v1h-1zM270 463h1v1h-1zM270 477h1v1h-1zM270 491h1v1h-1zM270 506h1v1h-1zM270 520h1v1h-1zM270 534h1v1h-1zM270 548h1v1h-1zM270 562h1v1h-1zM270 577h1v1h-1zM270 591h1v1h-1zM270 605h1v1h-1zM270 619h1v1h-1zM270 633h1v1h-1zM270 648h1v1h-1zM270 662h1v1h-1zM270 676h1v1h-1zM270 690h1v1h-1zM350 152h1v1h-1zM350 166h1v1h-1zM350 180h1v1h-1zM350 194h1v1h-1zM350 208h1v1h-1zM350 223h1v1h-1zM350 237h1v1h-1zM350 251h1v1h-1zM350 265h1v1h-1zM350 279h1v1h-1zM350 294h1v1h-1zM350 308h1v1h-1zM350 322h1v1h-1zM350 336h1v1h-1zM350 350h1v1h-1zM350 364h1v1h-1zM350 378h1v1h-1zM350 392h1v1h-1zM350 406h1v1h-1zM350 420h1v1h-1zM350 435h1v1h-1zM350 449h1v1h-1zM350 463h1v1h-1zM350 477h1v1h-1zM350 491h1v1h-1zM350 506h1v1h-1zM350 520h1v1h-1zM350 534h1v1h-1zM350 548h1v1h-1zM350 562h1v1h-1zM350 577h1v1h-1zM350 591h1v1h-1zM350 605h1v1h-1zM350 619h1v1h-1zM350 633h1v1h-1zM350 648h1v1h-1zM350 662h1v1h-1zM350 676h1v1h-1zM350 690h1v1h-1zM509 152h1v1h-1zM509 166h1v1h-1zM509 180h1v1h-1zM509 194h1v1h-1zM509 208h1v1h-1zM509 223h1v1h-1zM509 237h1v1h-1zM509 251h1v1h-1zM509 265h1v1h-1zM509 279h1v1h-1zM509 294h1v1h-1zM509 308h1v1h-1zM509 322h1v1h-1zM509 336h1v1h-1zM509 350h1v1h-1zM509 364h1v1h-1zM509 378h1v1h-1zM509 392h1v1h-1zM509 406h1v1h-1zM509 420h1v1h-1zM509 435h1v1h-1zM509 449h1v1h-1zM509 463h1v1h-1zM509 477h1v1h-1zM509 491h1v1h-1zM509 506h1v1h-1zM509 520h1v1h-1zM509 534h1v1h-1zM509 548h1v1h-1zM509 562h1v1h-1zM509 577h1v1h-1zM509 591h1v1h-1zM509 605h1v1h-1zM509 619h1v1h-1zM509 633h1v1h-1zM509 648h1v1h-1zM509 662h1v1h-1zM509 676h1v1h-1zM509 690h1v1h-1zM589 152h1v1h-1zM589 166h1v1h-1zM589 180h1v1h-1zM589 194h1v1h-1zM589 208h1v1h-1zM589 223h1v1h-1zM589 237h1v1h-1zM589 251h1v1h-1zM589 265h1v1h-1zM589 279h1v1h-1zM589 294h1v1h-1zM589 308h1v1h-1zM589 322h1v1h-1zM589 336h1v1h-1zM589 350h1v1h-1zM589 364h1v1h-1zM589 378h1v1h-1zM589 392h1v1h-1zM589 406h1v1h-1zM589 420h1v1h-1zM589 435h1v1h-1zM589 449h1v1h-1zM589 463h1v1h-1zM589 477h1v1h-1zM589 491h1v1h-1zM589 506h1v1h-1zM589 520h1v1h-1zM589 534h1v1h-1zM589 548h1v1h-1zM589 562h1v1h-1zM589 577h1v1h-1zM589 591h1v1h-1zM589 605h1v1h-1zM589 619h1v1h-1zM589 633h1v1h-1zM589 648h1v1h-1zM589 662h1v1h-1zM589 676h1v1h-1zM589 690h1v1h-1zM669 152h1v1h-1zM669 166h1v1h-1zM669 180h1v1h-1zM669 194h1v1h-1zM669 208h1v1h-1zM669 223h1v1h-1zM669 237h1v1h-1zM669 251h1v1h-1zM669 265h1v1h-1zM669 279h1v1h-1zM669 294h1v1h-1zM669 308h1v1h-1zM669 322h1v1h-1zM669 336h1v1h-1zM669 350h1v1h-1zM669 364h1v1h-1zM669 378h1v1h-1zM669 392h1v1h-1zM669 406h1v1h-1zM669 420h1v1h-1zM669 435h1v1h-1zM669 449h1v1h-1zM669 463h1v1h-1zM669 477h1v1h-1zM669 491h1v1h-1zM669 506h1v1h-1zM669 520h1v1h-1zM669 534h1v1h-1zM669 548h1v1h-1zM669 562h1v1h-1zM669 577h1v1h-1zM669 591h1v1h-1zM669 605h1v1h-1zM669 619h1v1h-1zM669 633h1v1h-1zM669 648h1v1h-1zM669 662h1v1h-1zM669 676h1v1h-1zM669 690h1v1h-1zM749 152h1v1h-1zM749 166h1v1h-1zM749 180h1v1h-1zM749 194h1v1h-1zM749 208h1v1h-1zM749 223h1v1h-1zM749 237h1v1h-1zM749 251h1v1h-1zM749 265h1v1h-1zM749 279h1v1h-1zM749 294h1v1h-1zM749 308h1v1h-1zM749 322h1v1h-1zM749 336h1v1h-1zM749 350h1v1h-1zM749 364h1v1h-1zM749 378h1v1h-1zM749 392h1v1h-1zM749 406h1v1h-1zM749 420h1v1h-1zM749 435h1v1h-1zM749 449h1v1h-1zM749 463h1v1h-1zM749 477h1v1h-1zM749 491h1v1h-1zM749 506h1v1h-1zM749 520h1v1h-1zM749 534h1v1h-1zM749 548h1v1h-1zM749 562h1v1h-1zM749 577h1v1h-1zM749 591h1v1h-1zM749 605h1v1h-1zM749 619h1v1h-1zM749 633h1v1h-1zM749 648h1v1h-1zM749 662h1v1h-1zM749 676h1v1h-1zM749 690h1v1h-1zM46 208h1v1h-1zM62 208h1v1h-1zM78 208h1v1h-1zM94 208h1v1h-1zM110 208h1v1h-1zM126 208h1v1h-1zM142 208h1v1h-1zM158 208h1v1h-1zM174 208h1v1h-1zM190 208h1v1h-1zM206 208h1v1h-1zM222 208h1v1h-1zM238 208h1v1h-1zM254 208h1v1h-1zM270 208h1v1h-1zM286 208h1v1h-1zM302 208h1v1h-1zM318 208h1v1h-1zM334 208h1v1h-1zM350 208h1v1h-1zM366 208h1v1h-1zM382 208h1v1h-1zM397 208h1v1h-1zM413 208h1v1h-1zM429 208h1v1h-1zM445 208h1v1h-1zM461 208h1v1h-1zM477 208h1v1h-1zM493 208h1v1h-1zM509 208h1v1h-1zM525 208h1v1h-1zM541 208h1v1h-1zM557 208h1v1h-1zM573 208h1v1h-1zM589 208h1v1h-1zM605 208h1v1h-1zM621 208h1v1h-1zM637 208h1v1h-1zM653 208h1v1h-1zM669 208h1v1h-1zM685 208h1v1h-1zM701 208h1v1h-1zM717 208h1v1h-1zM733 208h1v1h-1zM749 208h1v1h-1zM765 208h1v1h-1zM781 208h1v1h-1zM797 208h1v1h-1zM813 208h1v1h-1zM46 279h1v1h-1zM62 279h1v1h-1zM78 279h1v1h-1zM94 279h1v1h-1zM110 279h1v1h-1zM126 279h1v1h-1zM142 279h1v1h-1zM158 279h1v1h-1zM174 279h1v1h-1zM190 279h1v1h-1zM206 279h1v1h-1zM222 279h1v1h-1zM238 279h1v1h-1zM254 279h1v1h-1zM270 279h1v1h-1zM286 279h1v1h-1zM302 279h1v1h-1zM318 279h1v1h-1zM334 279h1v1h-1zM350 279h1v1h-1zM366 279h1v1h-1zM382 279h1v1h-1zM397 279h1v1h-1zM413 279h1v1h-1zM429 279h1v1h-1zM445 279h1v1h-1zM461 279h1v1h-1zM477 279h1v1h-1zM493 279h1v1h-1zM509 279h1v1h-1zM525 279h1v1h-1zM541 279h1v1h-1zM557 279h1v1h-1zM573 279h1v1h-1zM589 279h1v1h-1zM605 279h1v1h-1zM621 279h1v1h-1zM637 279h1v1h-1zM653 279h1v1h-1zM669 279h1v1h-1zM685 279h1v1h-1zM701 279h1v1h-1zM717 279h1v1h-1zM733 279h1v1h-1zM749 279h1v1h-1zM765 279h1v1h-1zM781 279h1v1h-1zM797 279h1v1h-1zM813 279h1v1h-1zM46 350h1v1h-1zM62 350h1v1h-1zM78 350h1v1h-1zM94 350h1v1h-1zM110 350h1v1h-1zM126 350h1v1h-1zM142 350h1v1h-1zM158 350h1v1h-1zM174 350h1v1h-1zM190 350h1v1h-1zM206 350h1v1h-1zM222 350h1v1h-1zM238 350h1v1h-1zM254 350h1v1h-1zM270 350h1v1h-1zM286 350h1v1h-1zM302 350h1v1h-1zM318 350h1v1h-1zM334 350h1v1h-1zM350 350h1v1h-1zM366 350h1v1h-1zM382 350h1v1h-1zM397 350h1v1h-1zM413 350h1v1h-1zM429 350h1v1h-1zM445 350h1v1h-1zM461 350h1v1h-1zM477 350h1v1h-1zM493 350h1v1h-1zM509 350h1v1h-1zM525 350h1v1h-1zM541 350h1v1h-1zM557 350h1v1h-1zM573 350h1v1h-1zM589 350h1v1h-1zM605 350h1v1h-1zM621 350h1v1h-1zM637 350h1v1h-1zM653 350h1v1h-1zM669 350h1v1h-1zM685 350h1v1h-1zM701 350h1v1h-1zM717 350h1v1h-1zM733 350h1v1h-1zM749 350h1v1h-1zM765 350h1v1h-1zM781 350h1v1h-1zM797 350h1v1h-1zM813 350h1v1h-1zM46 491h1v1h-1zM62 491h1v1h-1zM78 491h1v1h-1zM94 491h1v1h-1zM110 491h1v1h-1zM126 491h1v1h-1zM142 491h1v1h-1zM158 491h1v1h-1zM174 491h1v1h-1zM190 491h1v1h-1zM206 491h1v1h-1zM222 491h1v1h-1zM238 491h1v1h-1zM254 491h1v1h-1zM270 491h1v1h-1zM286 491h1v1h-1zM302 491h1v1h-1zM318 491h1v1h-1zM334 491h1v1h-1zM350 491h1v1h-1zM366 491h1v1h-1zM382 491h1v1h-1zM397 491h1v1h-1zM413 491h1v1h-1zM429 491h1v1h-1zM445 491h1v1h-1zM461 491h1v1h-1zM477 491h1v1h-1zM493 491h1v1h-1zM509 491h1v1h-1zM525 491h1v1h-1zM541 491h1v1h-1zM557 491h1v1h-1zM573 491h1v1h-1zM589 491h1v1h-1zM605 491h1v1h-1zM621 491h1v1h-1zM637 491h1v1h-1zM653 491h1v1h-1zM669 491h1v1h-1zM685 491h1v1h-1zM701 491h1v1h-1zM717 491h1v1h-1zM733 491h1v1h-1zM749 491h1v1h-1zM765 491h1v1h-1zM781 491h1v1h-1zM797 491h1v1h-1zM813 491h1v1h-1zM46 562h1v1h-1zM62 562h1v1h-1zM78 562h1v1h-1zM94 562h1v1h-1zM110 562h1v1h-1zM126 562h1v1h-1zM142 562h1v1h-1zM158 562h1v1h-1zM174 562h1v1h-1zM190 562h1v1h-1zM206 562h1v1h-1zM222 562h1v1h-1zM238 562h1v1h-1zM254 562h1v1h-1zM270 562h1v1h-1zM286 562h1v1h-1zM302 562h1v1h-1zM318 562h1v1h-1zM334 562h1v1h-1zM350 562h1v1h-1zM366 562h1v1h-1zM382 562h1v1h-1zM397 562h1v1h-1zM413 562h1v1h-1zM429 562h1v1h-1zM445 562h1v1h-1zM461 562h1v1h-1zM477 562h1v1h-1zM493 562h1v1h-1zM509 562h1v1h-1zM525 562h1v1h-1zM541 562h1v1h-1zM557 562h1v1h-1zM573 562h1v1h-1zM589 562h1v1h-1zM605 562h1v1h-1zM621 562h1v1h-1zM637 562h1v1h-1zM653 562h1v1h-1zM669 562h1v1h-1zM685 562h1v1h-1zM701 562h1v1h-1zM717 562h1v1h-1zM733 562h1v1h-1zM749 562h1v1h-1zM765 562h1v1h-1zM781 562h1v1h-1zM797 562h1v1h-1zM813 562h1v1h-1zM46 633h1v1h-1zM62 633h1v1h-1zM78 633h1v1h-1zM94 633h1v1h-1zM110 633h1v1h-1zM126 633h1v1h-1zM142 633h1v1h-1zM158 633h1v1h-1zM174 633h1v1h-1zM190 633h1v1h-1zM206 633h1v1h-1zM222 633h1v1h-1zM238 633h1v1h-1zM254 633h1v1h-1zM270 633h1v1h-1zM286 633h1v1h-1zM302 633h1v1h-1zM318 633h1v1h-1zM334 633h1v1h-1zM350 633h1v1h-1zM366 633h1v1h-1zM382 633h1v1h-1zM397 633h1v1h-1zM413 633h1v1h-1zM429 633h1v1h-1zM445 633h1v1h-1zM461 633h1v1h-1zM477 633h1v1h-1zM493 633h1v1h-1zM509 633h1v1h-1zM525 633h1v1h-1zM541 633h1v1h-1zM557 633h1v1h-1zM573 633h1v1h-1zM589 633h1v1h-1zM605 633h1v1h-1zM621 633h1v1h-1zM637 633h1v1h-1zM653 633h1v1h-1zM669 633h1v1h-1zM685 633h1v1h-1zM701 633h1v1h-1zM717 633h1v1h-1zM733 633h1v1h-1zM749 633h1v1h-1zM765 633h1v1h-1zM781 633h1v1h-1zM797 633h1v1h-1zM813 633h1v1h-1zM429 139h1v565h-1zM32 420h796v1h-796zM46 416h1v9h-1zM62 416h1v9h-1zM78 416h1v9h-1zM94 416h1v9h-1zM110 416h1v9h-1zM126 416h1v9h-1zM142 416h1v9h-1zM158 416h1v9h-1zM174 416h1v9h-1zM190 416h1v9h-1zM206 416h1v9h-1zM222 416h1v9h-1zM238 416h1v9h-1zM254 416h1v9h-1zM270 416h1v9h-1zM286 416h1v9h-1zM302 416h1v9h-1zM318 416h1v9h-1zM334 416h1v9h-1zM350 416h1v9h-1zM366 416h1v9h-1zM382 416h1v9h-1zM397 416h1v9h-1zM413 416h1v9h-1zM429 416h1v9h-1zM445 416h1v9h-1zM461 416h1v9h-1zM477 416h1v9h-1zM493 416h1v9h-1zM509 416h1v9h-1zM525 416h1v9h-1zM541 416h1v9h-1zM557 416h1v9h-1zM573 416h1v9h-1zM589 416h1v9h-1zM605 416h1v9h-1zM621 416h1v9h-1zM637 416h1v9h-1zM653 416h1v9h-1zM669 416h1v9h-1zM685 416h1v9h-1zM701 416h1v9h-1zM717 416h1v9h-1zM733 416h1v9h-1zM749 416h1v9h-1zM765 416h1v9h-1zM781 416h1v9h-1zM797 416h1v9h-1zM813 416h1v9h-1zM425 152h9v1h-9zM425 166h9v1h-9zM425 180h9v1h-9zM425 194h9v1h-9zM425 208h9v1h-9zM425 223h9v1h-9zM425 237h9v1h-9zM425 251h9v1h-9zM425 265h9v1h-9zM425 279h9v1h-9zM425 294h9v1h-9zM425 308h9v1h-9zM425 322h9v1h-9zM425 336h9v1h-9zM425 350h9v1h-9zM425 364h9v1h-9zM425 378h9v1h-9zM425 392h9v1h-9zM425 406h9v1h-9zM425 420h9v1h-9zM425 435h9v1h-9zM425 449h9v1h-9zM425 463h9v1h-9zM425 477h9v1h-9zM425 491h9v1h-9zM425 506h9v1h-9zM425 520h9v1h-9zM425 534h9v1h-9zM425 548h9v1h-9zM425 562h9v1h-9zM425 577h9v1h-9zM425 591h9v1h-9zM425 605h9v1h-9zM425 619h9v1h-9zM425 633h9v1h-9zM425 648h9v1h-9zM425 662h9v1h-9zM425 676h9v1h-9zM425 690h9v1h-9z" fill="#c8c8c8"/><path d="M30 271h1v1h-1zM31 271h1v7h-1zM32 277h1v5h-1zM33 281h1v5h-1zM34 285h1v5h-1zM35 289h1v6h-1zM36 294h1v5h-1zM37 298h1v6h-1zM38 303h1v6h-1zM39 308h1v3h-1zM40 310h1v5h-1zM41 314h1v6h-1zM42 319h1v6h-1zM43 324h1v6h-1zM44 329h1v5h-1zM45 333h1v5h-1zM46 337h1v5h-1zM47 341h1v4h-1zM48 344h1v5h-1zM49 348h1v4h-1zM50 351h1v4h-1zM51 354h1v4h-1zM52 357h1v4h-1zM53 360h1v5h-1zM54 364h1v4h-1zM55 367h1v4h-1zM56 370h1v4h-1zM57 373h1v3h-1zM58 375h1v3h-1zM59 377h1v2h-1zM60 378h1v3h-1zM61 380h1v3h-1zM62 382h1v4h-1zM63 385h1v2h-1zM64 386h1v2h-1zM65 387h1v2h-1zM66 388h1v1h-1zM67 388h1v1h-1zM68 388h1v1h-1zM69 388h1v3h-1zM70 390h1v1h-1zM71 390h1v1h-1zM72 389h1v2h-1zM73 388h1v2h-1zM74 386h1v3h-1zM75 386h1v1h-1zM76 386h1v1h-1zM77 385h1v2h-1zM78 383h1v3h-1zM79 382h1v2h-1zM80 380h1v3h-1zM81 379h1v2h-1zM82 378h1v2h-1zM83 375h1v4h-1zM84 372h1v4h-1zM85 370h1v3h-1zM86 367h1v4h-1zM87 364h1v4h-1zM88 360h1v5h-1zM89 356h1v5h-1zM90 354h1v3h-1zM91 351h1v4h-1zM92 348h1v4h-1zM93 345h1v4h-1zM94 342h1v4h-1zM95 338h1v5h-1zM96 334h1v5h-1zM97 329h1v6h-1zM98 325h1v5h-1zM99 321h1v5h-1zM100 317h1v5h-1zM101 311h1v7h-1zM102 307h1v5h-1zM103 304h1v4h-1zM104 299h1v6h-1zM105 294h1v6h-1zM106 290h1v5h-1zM107 285h1v6h-1zM108 279h1v7h-1zM109 275h1v5h-1zM110 271h1v5h-1zM111 267h1v5h-1zM112 263h1v5h-1zM113 258h1v6h-1zM114 252h1v7h-1zM115 247h1v6h-1zM116 242h1v6h-1zM117 239h1v4h-1zM118 235h1v5h-1zM119 231h1v5h-1zM120 226h1v6h-1zM121 221h1v6h-1zM122 216h1v6h-1zM123 212h1v5h-1zM124 208h1v5h-1zM125 206h1v3h-1zM126 202h1v5h-1zM127 198h1v5h-1zM128 194h1v5h-1zM129 190h1v5h-1zM130 185h1v6h-1zM131 182h1v4h-1zM132 180h1v3h-1zM133 178h1v3h-1zM134 175h1v4h-1zM135 171h1v5h-1zM136 170h1v2h-1zM137 168h1v3h-1zM138 165h1v4h-1zM139 163h1v3h-1zM140 162h1v2h-1zM141 160h1v3h-1zM142 159h1v2h-1zM143 158h1v2h-1zM144 156h1v3h-1zM145 155h1v2h-1zM146 154h1v2h-1zM147 153h1v2h-1zM148 153h1v1h-1zM149 153h1v1h-1zM150 153h1v1h-1zM151 153h1v1h-1zM152 153h1v1h-1zM153 153h1v1h-1zM154 153h1v1h-1zM155 153h1v2h-1zM156 154h1v2h-1zM157 155h1v3h-1zM158 157h1v2h-1zM159 158h1v3h-1zM160 160h1v3h-1zM161 162h1v4h-1zM162 165h1v2h-1zM163 166h1v2h-1zM164 167h1v3h-1zM165 169h1v4h-1zM166 172h1v3h-1zM167 174h1v4h-1zM168 177h1v5h-1zM169 181h1v5h-1zM170 185h1v4h-1zM171 188h1v5h-1zM172 192h1v5h-1zM173 196h1v3h-1zM174 198h1v5h-1zM175 202h1v5h-1zM176 206h1v5h-1zM177 210h1v5h-1zM178 214h1v4h-1zM179 217h1v5h-1zM180 221h1v7h-1zM181 227h1v5h-1zM182 231h1v5h-1zM183 235h1v5h-1zM184 239h1v5h-1zM185 243h1v6h-1zM186 248h1v5h-1zM187 252h1v6h-1zM188 257h1v6h-1zM189 262h1v7h-1zM190 268h1v6h-1zM191 273h1v5h-1zM192 277h1v5h-1zM193 281h1v5h-1zM194 285h1v5h-1zM195 289h1v6h-1zM196 294h1v5h-1zM197 298h1v6h-1zM198 303h1v6h-1zM199 308h1v5h-1zM200 312h1v6h-1zM201 317h1v5h-1zM202 321h1v5h-1zM203 325h1v5h-1zM204 329h1v5h-1zM205 333h1v5h-1zM206 337h1v5h-1zM207 341h1v4h-1zM208 344h1v5h-1zM209 348h1v5h-1zM210 352h1v5h-1zM211 356h1v4h-1zM212 359h1v4h-1zM213 362h1v4h-1zM214 365h1v3h-1zM215 367h1v4h-1zM216 370h1v3h-1zM217 372h1v3h-1zM218 374h1v3h-1zM219 376h1v3h-1zM220 378h1v3h-1zM221 380h1v3h-1zM222 382h1v4h-1zM223 385h1v2h-1zM224 386h1v1h-1zM225 386h1v1h-1zM226 386h1v3h-1zM227 388h1v1h-1zM228 388h1v1h-1zM229 388h1v3h-1zM230 390h1v1h-1zM231 388h1v3h-1zM232 388h1v1h-1zM233 388h1v1h-1zM234 388h1v1h-1zM235 387h1v2h-1zM236 386h1v2h-1zM237 385h1v2h-1zM238 383h1v3h-1zM239 382h1v2h-1zM240 380h1v3h-1zM241 379h1v2h-1zM242 378h1v2h-1zM243 375h1v4h-1zM244 372h1v4h-1zM245 370h1v3h-1zM246 367h1v4h-1zM247 364h1v4h-1zM248 360h1v5h-1zM249 356h1v5h-1zM250 354h1v3h-1zM251 351h1v4h-1zM252 348h1v4h-1zM253 344h1v5h-1zM254 340h1v5h-1zM255 335h1v6h-1zM256 331h1v5h-1zM257 327h1v5h-1zM258 323h1v5h-1zM259 320h1v4h-1zM260 317h1v4h-1zM261 313h1v5h-1zM262 308h1v6h-1zM263 302h1v7h-1zM264 298h1v5h-1zM265 293h1v6h-1zM266 288h1v6h-1zM267 283h1v6h-1zM268 279h1v5h-1zM269 275h1v5h-1zM270 270h1v6h-1zM271 265h1v6h-1zM272 260h1v6h-1zM273 256h1v5h-1zM274 252h1v5h-1zM275 248h1v5h-1zM276 244h1v5h-1zM277 238h1v7h-1zM278 233h1v6h-1zM279 229h1v5h-1zM280 225h1v5h-1zM281 221h1v5h-1zM282 216h1v6h-1zM283 213h1v4h-1zM284 210h1v4h-1zM285 205h1v6h-1zM286 200h1v6h-1zM287 196h1v5h-1zM288 193h1v4h-1zM289 190h1v4h-1zM290 187h1v4h-1zM291 183h1v5h-1zM292 179h1v5h-1zM293 177h1v3h-1zM294 174h1v4h-1zM295 171h1v4h-1zM296 170h1v2h-1zM297 168h1v3h-1zM298 165h1v4h-1zM299 163h1v3h-1zM300 162h1v2h-1zM301 160h1v3h-1zM302 158h1v3h-1zM303 156h1v3h-1zM304 155h1v2h-1zM305 155h1v1h-1zM306 155h1v1h-1zM307 154h1v2h-1zM308 153h1v2h-1zM309 153h1v1h-1zM310 153h1v1h-1zM311 153h1v1h-1zM312 153h1v1h-1zM313 153h1v2h-1zM314 154h1v2h-1zM315 155h1v1h-1zM316 155h1v1h-1zM317 155h1v3h-1zM318 157h1v2h-1zM319 158h1v3h-1zM320 160h1v3h-1zM321 162h1v4h-1zM322 165h1v2h-1zM323 166h1v3h-1zM324 168h1v4h-1zM325 171h1v4h-1zM326 174h1v4h-1zM327 177h1v3h-1zM328 179h1v3h-1zM329 181h1v3h-1zM330 183h1v5h-1zM331 187h1v6h-1zM332 192h1v5h-1zM333 196h1v3h-1zM334 198h1v5h-1zM335 202h1v5h-1zM336 206h1v5h-1zM337 210h1v5h-1zM338 214h1v5h-1zM339 218h1v6h-1zM340 223h1v5h-1zM341 227h1v5h-1zM342 231h1v6h-1zM343 236h1v6h-1zM344 241h1v6h-1zM345 246h1v5h-1zM346 250h1v5h-1zM347 254h1v6h-1zM348 259h1v6h-1zM349 264h1v6h-1zM350 269h1v5h-1zM351 273h1v7h-1zM352 279h1v5h-1zM353 283h1v5h-1zM354 287h1v6h-1zM355 292h1v5h-1zM356 296h1v5h-1zM357 300h1v7h-1zM358 306h1v5h-1zM359 310h1v6h-1zM360 315h1v5h-1zM361 319h1v5h-1zM362 323h1v5h-1zM363 327h1v5h-1zM364 331h1v5h-1zM365 335h1v4h-1zM366 338h1v5h-1zM367 342h1v5h-1zM368 346h1v5h-1zM369 350h1v5h-1zM370 354h1v3h-1zM371 356h1v4h-1zM372 359h1v4h-1zM373 362h1v4h-1zM374 365h1v3h-1zM375 367h1v2h-1zM376 368h1v5h-1zM377 372h1v4h-1zM378 375h1v3h-1zM379 377h1v3h-1zM380 379h1v4h-1zM381 382h1v2h-1zM382 383h1v3h-1zM383 385h1v2h-1zM384 386h1v2h-1zM385 387h1v2h-1zM386 388h1v1h-1zM387 388h1v1h-1zM388 388h1v1h-1zM389 388h1v1h-1zM390 388h1v2h-1zM391 389h1v2h-1zM392 389h1v2h-1zM393 388h1v2h-1zM394 388h1v1h-1zM395 387h1v2h-1zM396 386h1v2h-1zM397 385h1v2h-1zM398 383h1v3h-1zM399 382h1v2h-1zM400 380h1v3h-1zM401 379h1v2h-1zM402 376h1v4h-1zM403 374h1v3h-1zM404 372h1v3h-1zM405 370h1v3h-1zM406 366h1v5h-1zM407 362h1v5h-1zM408 359h1v4h-1zM409 356h1v4h-1zM410 354h1v3h-1zM411 351h1v4h-1zM412 348h1v4h-1zM413 344h1v5h-1zM414 339h1v6h-1zM415 333h1v7h-1zM416 330h1v4h-1zM417 327h1v4h-1zM418 323h1v5h-1zM419 319h1v5h-1zM420 315h1v5h-1zM421 310h1v6h-1zM422 306h1v5h-1zM423 300h1v7h-1zM424 296h1v5h-1zM425 292h1v5h-1zM426 287h1v6h-1zM427 283h1v5h-1zM428 279h1v5h-1zM429 275h1v5h-1zM430 270h1v6h-1zM431 265h1v6h-1zM432 260h1v6h-1zM433 256h1v5h-1zM434 250h1v7h-1zM435 246h1v5h-1zM436 241h1v6h-1zM437 237h1v5h-1zM438 233h1v5h-1zM439 229h1v5h-1zM440 224h1v6h-1zM441 218h1v7h-1zM442 214h1v5h-1zM443 210h1v5h-1zM444 206h1v5h-1zM445 203h1v4h-1zM446 201h1v3h-1zM447 198h1v4h-1zM448 194h1v5h-1zM449 190h1v5h-1zM450 185h1v6h-1zM451 182h1v4h-1zM452 179h1v4h-1zM453 177h1v3h-1zM454 174h1v4h-1zM455 171h1v4h-1zM456 168h1v4h-1zM457 166h1v3h-1zM458 165h1v2h-1zM459 163h1v3h-1zM460 162h1v2h-1zM461 160h1v3h-1zM462 159h1v2h-1zM463 158h1v2h-1zM464 155h1v4h-1zM465 154h1v2h-1zM466 154h1v2h-1zM467 154h1v2h-1zM468 153h1v2h-1zM469 153h1v1h-1zM470 153h1v1h-1zM471 153h1v1h-1zM472 153h1v1h-1zM473 153h1v2h-1zM474 154h1v2h-1zM475 155h1v2h-1zM476 156h1v3h-1zM477 158h1v1h-1zM478 158h1v2h-1zM479 159h1v4h-1zM480 162h1v2h-1zM481 163h1v3h-1zM482 165h1v2h-1zM483 166h1v3h-1zM484 168h1v4h-1zM485 171h1v4h-1zM486 174h1v4h-1zM487 177h1v3h-1zM488 179h1v4h-1zM489 182h1v4h-1zM490 185h1v6h-1zM491 190h1v4h-1zM492 193h1v4h-1zM493 196h1v5h-1zM494 200h1v5h-1zM495 204h1v5h-1zM496 208h1v5h-1zM497 212h1v5h-1zM498 216h1v6h-1zM499 221h1v5h-1zM500 225h1v5h-1zM501 229h1v5h-1zM502 233h1v5h-1zM503 237h1v5h-1zM504 241h1v6h-1zM505 246h1v5h-1zM506 250h1v7h-1zM507 256h1v5h-1zM508 260h1v5h-1zM509 264h1v6h-1zM510 269h1v5h-1zM511 273h1v7h-1zM512 279h1v5h-1zM513 283h1v5h-1zM514 287h1v6h-1zM515 292h1v6h-1zM516 297h1v6h-1zM517 302h1v5h-1zM518 306h1v5h-1zM519 310h1v6h-1zM520 315h1v5h-1zM521 319h1v5h-1zM522 323h1v5h-1zM523 327h1v5h-1zM524 331h1v5h-1zM525 335h1v6h-1zM526 340h1v5h-1zM527 344h1v5h-1zM528 348h1v4h-1zM529 351h1v4h-1zM530 354h1v5h-1zM531 358h1v4h-1zM532 361h1v4h-1zM533 364h1v2h-1zM534 365h1v3h-1zM535 367h1v4h-1zM536 370h1v4h-1zM537 373h1v3h-1zM538 375h1v3h-1zM539 377h1v3h-1zM540 379h1v4h-1zM541 382h1v2h-1zM542 383h1v3h-1zM543 385h1v2h-1zM544 386h1v2h-1zM545 387h1v2h-1zM546 388h1v1h-1zM547 388h1v1h-1zM548 388h1v1h-1zM549 388h1v3h-1zM550 390h1v1h-1zM551 390h1v1h-1zM552 389h1v2h-1zM553 388h1v2h-1zM554 386h1v3h-1zM555 386h1v1h-1zM556 386h1v1h-1zM557 383h1v4h-1zM558 382h1v2h-1zM559 382h1v1h-1zM560 380h1v3h-1zM561 379h1v2h-1zM562 376h1v4h-1zM563 373h1v4h-1zM564 370h1v4h-1zM565 367h1v4h-1zM566 365h1v3h-1zM567 362h1v4h-1zM568 359h1v4h-1zM569 356h1v4h-1zM570 354h1v3h-1zM571 349h1v6h-1zM572 344h1v6h-1zM573 341h1v4h-1zM574 337h1v5h-1zM575 333h1v5h-1zM576 330h1v4h-1zM577 327h1v4h-1zM578 323h1v5h-1zM579 319h1v5h-1zM580 315h1v5h-1zM581 309h1v7h-1zM582 304h1v6h-1zM583 300h1v5h-1zM584 296h1v5h-1zM585 292h1v5h-1zM586 287h1v6h-1zM587 282h1v6h-1zM588 277h1v6h-1zM589 273h1v5h-1zM590 269h1v5h-1zM591 264h1v6h-1zM592 259h1v6h-1zM593 253h1v7h-1zM594 248h1v6h-1zM595 244h1v5h-1zM596 241h1v4h-1zM597 236h1v6h-1zM598 231h1v6h-1zM599 227h1v5h-1zM600 223h1v5h-1zM601 218h1v6h-1zM602 214h1v5h-1zM603 210h1v5h-1zM604 206h1v5h-1zM605 202h1v5h-1zM606 198h1v5h-1zM607 193h1v6h-1zM608 191h1v3h-1zM609 188h1v4h-1zM610 185h1v4h-1zM611 182h1v4h-1zM612 179h1v4h-1zM613 177h1v3h-1zM614 174h1v4h-1zM615 171h1v4h-1zM616 168h1v4h-1zM617 166h1v3h-1zM618 165h1v2h-1zM619 162h1v4h-1zM620 160h1v3h-1zM621 158h1v3h-1zM622 157h1v2h-1zM623 155h1v3h-1zM624 155h1v1h-1zM625 155h1v1h-1zM626 154h1v2h-1zM627 153h1v2h-1zM628 153h1v1h-1zM629 153h1v1h-1zM630 153h1v1h-1zM631 153h1v1h-1zM632 153h1v1h-1zM633 153h1v2h-1zM634 154h1v2h-1zM635 155h1v2h-1zM636 156h1v3h-1zM637 158h1v2h-1zM638 159h1v2h-1zM639 160h1v3h-1zM640 162h1v2h-1zM641 163h1v3h-1zM642 165h1v2h-1zM643 166h1v3h-1zM644 168h1v4h-1zM645 171h1v4h-1zM646 174h1v4h-1zM647 177h1v3h-1zM648 179h1v5h-1zM649 183h1v5h-1zM650 187h1v4h-1zM651 190h1v4h-1zM652 193h1v4h-1zM653 196h1v5h-1zM654 200h1v5h-1zM655 204h1v5h-1zM656 208h1v5h-1zM657 212h1v5h-1zM658 216h1v4h-1zM659 219h1v6h-1zM660 224h1v6h-1zM661 229h1v5h-1zM662 233h1v5h-1zM663 237h1v5h-1zM664 241h1v7h-1zM665 247h1v6h-1zM666 252h1v5h-1zM667 256h1v5h-1zM668 260h1v6h-1zM669 265h1v6h-1zM670 270h1v6h-1zM671 275h1v5h-1zM672 279h1v5h-1zM673 283h1v6h-1zM674 288h1v6h-1zM675 293h1v6h-1zM676 298h1v5h-1zM677 302h1v5h-1zM678 306h1v5h-1zM679 310h1v6h-1zM680 315h1v5h-1zM681 319h1v5h-1zM682 323h1v7h-1zM683 329h1v6h-1zM684 334h1v5h-1zM685 338h1v3h-1zM686 340h1v4h-1zM687 343h1v4h-1zM688 346h1v5h-1zM689 350h1v5h-1zM690 354h1v3h-1zM691 356h1v4h-1zM692 359h1v4h-1zM693 362h1v5h-1zM694 366h1v5h-1zM695 370h1v3h-1zM696 372h1v3h-1zM697 374h1v3h-1zM698 376h1v4h-1zM699 379h1v2h-1zM700 380h1v3h-1zM701 382h1v2h-1zM702 383h1v3h-1zM703 385h1v2h-1zM704 386h1v2h-1zM705 387h1v2h-1zM706 388h1v1h-1zM707 388h1v2h-1zM708 389h1v2h-1zM709 390h1v1h-1zM710 390h1v1h-1zM711 388h1v3h-1zM712 388h1v1h-1zM713 388h1v1h-1zM714 386h1v3h-1zM715 385h1v2h-1zM716 384h1v2h-1zM717 384h1v1h-1zM718 383h1v2h-1zM719 382h1v2h-1zM720 379h1v4h-1zM721 377h1v3h-1zM722 375h1v3h-1zM723 374h1v2h-1zM724 372h1v3h-1zM725 368h1v5h-1zM726 365h1v4h-1zM727 362h1v4h-1zM728 358h1v5h-1zM729 354h1v5h-1zM730 351h1v4h-1zM731 349h1v3h-1zM732 346h1v4h-1zM733 342h1v5h-1zM734 337h1v6h-1zM735 333h1v5h-1zM736 329h1v5h-1zM737 325h1v5h-1zM738 321h1v5h-1zM739 317h1v5h-1zM740 312h1v6h-1zM741 308h1v5h-1zM742 303h1v6h-1zM743 298h1v6h-1zM744 295h1v4h-1zM745 291h1v5h-1zM746 286h1v6h-1zM747 281h1v6h-1zM748 277h1v5h-1zM749 271h1v7h-1zM750 266h1v6h-1zM751 262h1v5h-1zM752 258h1v5h-1zM753 254h1v5h-1zM754 250h1v5h-1zM755 246h1v5h-1zM756 241h1v6h-1zM757 236h1v6h-1zM758 231h1v6h-1zM759 227h1v5h-1zM760 223h1v5h-1zM761 218h1v6h-1zM762 214h1v5h-1zM763 210h1v5h-1zM764 206h1v5h-1zM765 202h1v5h-1zM766 198h1v5h-1zM767 196h1v3h-1zM768 192h1v5h-1zM769 188h1v5h-1zM770 185h1v4h-1zM771 182h1v4h-1zM772 179h1v4h-1zM773 175h1v5h-1zM774 172h1v4h-1zM775 171h1v2h-1zM776 168h1v4h-1zM777 166h1v3h-1zM778 163h1v4h-1zM779 161h1v3h-1zM780 160h1v2h-1zM781 158h1v3h-1zM782 157h1v2h-1zM783 155h1v3h-1zM784 154h1v2h-1zM785 153h1v2h-1zM786 153h1v1h-1zM787 153h1v1h-1zM788 153h1v1h-1zM789 153h1v1h-1zM790 153h1v1h-1zM791 153h1v1h-1zM792 153h1v2h-1zM793 154h1v2h-1zM794 155h1v1h-1zM795 155h1v1h-1zM796 155h1v2h-1zM797 156h1v3h-1zM798 158h1v3h-1zM799 160h1v3h-1zM800 162h1v2h-1zM801 163h1v3h-1zM802 165h1v4h-1zM803 168h1v4h-1zM804 171h1v3h-1zM805 173h1v3h-1zM806 175h1v3h-1zM807 177h1v3h-1zM808 179h1v5h-1zM809 183h1v6h-1zM810 188h1v5h-1zM811 192h1v4h-1zM812 195h1v4h-1zM813 198h1v5h-1zM814 202h1v5h-1zM815 206h1v5h-1zM816 210h1v4h-1zM817 213h1v4h-1zM818 216h1v6h-1zM819 221h1v5h-1zM820 225h1v5h-1zM821 229h1v5h-1zM822 233h1v6h-1zM823 238h1v7h-1zM824 244h1v5h-1zM825 248h1v5h-1zM826 252h1v5h-1zM827 256h1v6h-1zM828 261h1v7h-1z" fill="#ffff00"/><path d="M30 343h1v1h-1zM31 343h1v4h-1zM32 346h1v6h-1zM33 351h1v6h-1zM34 356h1v5h-1zM35 360h1v7h-1zM36 366h1v6h-1zM37 371h1v4h-1zM38 374h1v5h-1zM39 378h1v6h-1zM40 383h1v6h-1zM41 388h1v5h-1zM42 392h1v5h-1zM43 396h1v5h-1zM44 400h1v5h-1zM45 404h1v4h-1zM46 407h1v4h-1zM47 410h1v5h-1zM48 414h1v6h-1zM49 419h1v4h-1zM50 422h1v4h-1zM51 425h1v4h-1zM52 428h1v4h-1zM53 431h1v3h-1zM54 433h1v5h-1zM55 437h1v5h-1zM56 441h1v3h-1zM57 443h1v3h-1zM58 445h1v3h-1zM59 447h1v3h-1zM60 449h1v3h-1zM61 451h1v3h-1zM62 453h1v4h-1zM63 456h1v2h-1zM64 457h1v1h-1zM65 457h1v1h-1zM66 457h1v3h-1zM67 459h1v1h-1zM68 459h1v1h-1zM69 459h1v3h-1zM70 461h1v1h-1zM71 459h1v3h-1zM72 459h1v1h-1zM73 459h1v1h-1zM74 459h1v1h-1zM75 458h1v2h-1zM76 457h1v2h-1zM77 456h1v2h-1zM78 454h1v3h-1zM79 453h1v2h-1zM80 450h1v4h-1zM81 448h1v3h-1zM82 446h1v3h-1zM83 445h1v2h-1zM84 443h1v3h-1zM85 441h1v3h-1zM86 438h1v4h-1zM87 435h1v4h-1zM88 431h1v5h-1zM89 427h1v5h-1zM90 425h1v3h-1zM91 421h1v5h-1zM92 417h1v5h-1zM93 414h1v4h-1zM94 411h1v4h-1zM95 406h1v6h-1zM96 402h1v5h-1zM97 399h1v4h-1zM98 396h1v4h-1zM99 392h1v5h-1zM100 388h1v5h-1zM101 384h1v5h-1zM102 379h1v6h-1zM103 373h1v7h-1zM104 369h1v5h-1zM105 364h1v6h-1zM106 359h1v6h-1zM107 355h1v5h-1zM108 352h1v4h-1zM109 345h1v8h-1zM110 340h1v6h-1zM111 338h1v3h-1zM112 332h1v7h-1zM113 327h1v6h-1zM114 323h1v5h-1zM115 318h1v6h-1zM116 313h1v6h-1zM117 310h1v4h-1zM118 306h1v5h-1zM119 302h1v5h-1zM120 297h1v6h-1zM121 292h1v6h-1zM122 287h1v6h-1zM123 283h1v5h-1zM124 279h1v5h-1zM125 275h1v5h-1zM126 271h1v5h-1zM127 267h1v5h-1zM128 264h1v4h-1zM129 261h1v4h-1zM130 258h1v4h-1zM131 255h1v4h-1zM132 253h1v3h-1zM133 248h1v6h-1zM134 246h1v3h-1zM135 244h1v3h-1zM136 242h1v3h-1zM137 239h1v4h-1zM138 236h1v4h-1zM139 234h1v3h-1zM140 233h1v2h-1zM141 231h1v3h-1zM142 230h1v2h-1zM143 229h1v2h-1zM144 227h1v3h-1zM145 226h1v2h-1zM146 225h1v2h-1zM147 224h1v2h-1zM148 224h1v1h-1zM149 223h1v2h-1zM150 223h1v1h-1zM151 223h1v2h-1zM152 224h1v1h-1zM153 224h1v1h-1zM154 224h1v1h-1zM155 224h1v2h-1zM156 225h1v2h-1zM157 226h1v3h-1zM158 228h1v2h-1zM159 229h1v3h-1zM160 231h1v3h-1zM161 233h1v4h-1zM162 236h1v2h-1zM163 237h1v3h-1zM164 239h1v4h-1zM165 242h1v2h-1zM166 243h1v3h-1zM167 245h1v4h-1zM168 248h1v5h-1zM169 252h1v5h-1zM170 256h1v4h-1zM171 259h1v4h-1zM172 262h1v3h-1zM173 264h1v6h-1zM174 269h1v5h-1zM175 273h1v5h-1zM176 277h1v5h-1zM177 281h1v5h-1zM178 285h1v5h-1zM179 289h1v6h-1zM180 294h1v5h-1zM181 298h1v5h-1zM182 302h1v5h-1zM183 306h1v5h-1zM184 310h1v7h-1zM185 316h1v5h-1zM186 320h1v4h-1zM187 323h1v6h-1zM188 328h1v6h-1zM189 333h1v7h-1zM190 339h1v6h-1zM191 344h1v5h-1zM192 348h1v5h-1zM193 352h1v6h-1zM194 357h1v6h-1zM195 362h1v6h-1zM196 367h1v5h-1zM197 371h1v5h-1zM198 375h1v6h-1zM199 380h1v7h-1zM200 386h1v4h-1zM201 389h1v4h-1zM202 392h1v5h-1zM203 396h1v5h-1zM204 400h1v5h-1zM205 404h1v5h-1zM206 408h1v6h-1zM207 413h1v5h-1zM208 417h1v4h-1zM209 420h1v4h-1zM210 423h1v5h-1zM211 427h1v4h-1zM212 430h1v4h-1zM213 433h1v4h-1zM214 436h1v3h-1zM215 438h1v4h-1zM216 441h1v4h-1zM217 444h1v3h-1zM218 446h1v3h-1zM219 448h1v3h-1zM220 450h1v4h-1zM221 453h1v1h-1zM222 453h1v1h-1zM223 453h1v3h-1zM224 455h1v3h-1zM225 457h1v3h-1zM226 459h1v1h-1zM227 459h1v2h-1zM228 460h1v3h-1zM229 462h1v1h-1zM230 462h1v1h-1zM231 462h1v1h-1zM232 460h1v3h-1zM233 459h1v2h-1zM234 459h1v1h-1zM235 458h1v2h-1zM236 457h1v2h-1zM237 456h1v2h-1zM238 454h1v3h-1zM239 453h1v2h-1zM240 451h1v3h-1zM241 450h1v2h-1zM242 447h1v4h-1zM243 444h1v4h-1zM244 441h1v4h-1zM245 438h1v4h-1zM246 436h1v3h-1zM247 435h1v2h-1zM248 432h1v4h-1zM249 429h1v4h-1zM250 425h1v5h-1zM251 422h1v4h-1zM252 419h1v4h-1zM253 415h1v5h-1zM254 411h1v5h-1zM255 406h1v6h-1zM256 402h1v5h-1zM257 398h1v5h-1zM258 394h1v5h-1zM259 391h1v4h-1zM260 388h1v4h-1zM261 382h1v7h-1zM262 377h1v6h-1zM263 373h1v5h-1zM264 369h1v5h-1zM265 365h1v5h-1zM266 361h1v5h-1zM267 356h1v6h-1zM268 350h1v7h-1zM269 346h1v5h-1zM270 341h1v6h-1zM271 336h1v6h-1zM272 331h1v6h-1zM273 327h1v5h-1zM274 323h1v5h-1zM275 319h1v5h-1zM276 315h1v5h-1zM277 309h1v7h-1zM278 303h1v7h-1zM279 298h1v6h-1zM280 295h1v4h-1zM281 292h1v4h-1zM282 289h1v4h-1zM283 285h1v5h-1zM284 279h1v7h-1zM285 275h1v5h-1zM286 272h1v4h-1zM287 269h1v4h-1zM288 265h1v5h-1zM289 261h1v5h-1zM290 258h1v4h-1zM291 254h1v5h-1zM292 250h1v5h-1zM293 248h1v3h-1zM294 245h1v4h-1zM295 242h1v4h-1zM296 239h1v4h-1zM297 237h1v3h-1zM298 236h1v2h-1zM299 234h1v3h-1zM300 233h1v2h-1zM301 231h1v3h-1zM302 230h1v2h-1zM303 229h1v2h-1zM304 227h1v3h-1zM305 226h1v2h-1zM306 225h1v2h-1zM307 224h1v2h-1zM308 224h1v1h-1zM309 224h1v1h-1zM310 224h1v1h-1zM311 224h1v1h-1zM312 224h1v1h-1zM313 224h1v2h-1zM314 225h1v2h-1zM315 226h1v1h-1zM316 226h1v1h-1zM317 226h1v3h-1zM318 228h1v2h-1zM319 229h1v3h-1zM320 231h1v3h-1zM321 233h1v4h-1zM322 236h1v4h-1zM323 239h1v3h-1zM324 241h1v2h-1zM325 242h1v4h-1zM326 245h1v4h-1zM327 248h1v3h-1zM328 250h1v4h-1zM329 253h1v4h-1zM330 256h1v4h-1zM331 259h1v5h-1zM332 263h1v5h-1zM333 267h1v3h-1zM334 269h1v5h-1zM335 273h1v5h-1zM336 277h1v5h-1zM337 281h1v5h-1zM338 285h1v5h-1zM339 289h1v6h-1zM340 294h1v5h-1zM341 298h1v5h-1zM342 302h1v6h-1zM343 307h1v6h-1zM344 312h1v6h-1zM345 317h1v5h-1zM346 321h1v5h-1zM347 325h1v5h-1zM348 329h1v5h-1zM349 333h1v7h-1zM350 339h1v6h-1zM351 344h1v5h-1zM352 348h1v6h-1zM353 353h1v6h-1zM354 358h1v6h-1zM355 363h1v6h-1zM356 368h1v6h-1zM357 373h1v4h-1zM358 376h1v5h-1zM359 380h1v7h-1zM360 386h1v5h-1zM361 390h1v5h-1zM362 394h1v5h-1zM363 398h1v4h-1zM364 401h1v4h-1zM365 404h1v7h-1zM366 410h1v5h-1zM367 414h1v4h-1zM368 417h1v4h-1zM369 420h1v4h-1zM370 423h1v5h-1zM371 427h1v4h-1zM372 430h1v4h-1zM373 433h1v5h-1zM374 437h1v4h-1zM375 440h1v2h-1zM376 441h1v4h-1zM377 444h1v3h-1zM378 446h1v3h-1zM379 448h1v3h-1zM380 450h1v4h-1zM381 453h1v2h-1zM382 454h1v3h-1zM383 456h1v2h-1zM384 457h1v2h-1zM385 458h1v2h-1zM386 459h1v1h-1zM387 459h1v1h-1zM388 459h1v1h-1zM389 459h1v3h-1zM390 461h1v1h-1zM391 459h1v3h-1zM392 459h1v1h-1zM393 459h1v1h-1zM394 459h1v1h-1zM395 458h1v2h-1zM396 457h1v2h-1zM397 456h1v2h-1zM398 454h1v3h-1zM399 453h1v2h-1zM400 450h1v4h-1zM401 447h1v4h-1zM402 445h1v3h-1zM403 443h1v3h-1zM404 441h1v3h-1zM405 438h1v4h-1zM406 436h1v3h-1zM407 433h1v4h-1zM408 430h1v4h-1zM409 427h1v4h-1zM410 425h1v3h-1zM411 421h1v5h-1zM412 417h1v5h-1zM413 413h1v5h-1zM414 409h1v5h-1zM415 406h1v4h-1zM416 402h1v5h-1zM417 398h1v5h-1zM418 394h1v5h-1zM419 390h1v5h-1zM420 386h1v5h-1zM421 381h1v6h-1zM422 377h1v5h-1zM423 373h1v5h-1zM424 368h1v6h-1zM425 363h1v6h-1zM426 358h1v6h-1zM427 353h1v6h-1zM428 348h1v6h-1zM429 344h1v5h-1zM430 340h1v5h-1zM431 335h1v6h-1zM432 330h1v6h-1zM433 325h1v6h-1zM434 321h1v5h-1zM435 317h1v5h-1zM436 312h1v6h-1zM437 308h1v5h-1zM438 304h1v5h-1zM439 300h1v5h-1zM440 295h1v6h-1zM441 290h1v6h-1zM442 287h1v4h-1zM443 282h1v6h-1zM444 277h1v6h-1zM445 273h1v5h-1zM446 270h1v4h-1zM447 269h1v2h-1zM448 265h1v5h-1zM449 261h1v5h-1zM450 256h1v6h-1zM451 253h1v4h-1zM452 250h1v4h-1zM453 248h1v3h-1zM454 246h1v3h-1zM455 244h1v3h-1zM456 240h1v5h-1zM457 237h1v4h-1zM458 236h1v2h-1zM459 233h1v4h-1zM460 231h1v3h-1zM461 229h1v3h-1zM462 229h1v1h-1zM463 229h1v1h-1zM464 226h1v4h-1zM465 224h1v3h-1zM466 224h1v1h-1zM467 224h1v1h-1zM468 224h1v1h-1zM469 224h1v1h-1zM470 224h1v1h-1zM471 224h1v1h-1zM472 224h1v1h-1zM473 224h1v2h-1zM474 225h1v2h-1zM475 226h1v1h-1zM476 226h1v2h-1zM477 227h1v3h-1zM478 229h1v3h-1zM479 231h1v3h-1zM480 233h1v2h-1zM481 234h1v3h-1zM482 236h1v2h-1zM483 237h1v3h-1zM484 239h1v4h-1zM485 242h1v4h-1zM486 245h1v4h-1zM487 248h1v3h-1zM488 250h1v4h-1zM489 253h1v4h-1zM490 256h1v6h-1zM491 261h1v4h-1zM492 264h1v4h-1zM493 267h1v5h-1zM494 271h1v5h-1zM495 275h1v5h-1zM496 279h1v4h-1zM497 282h1v4h-1zM498 285h1v5h-1zM499 289h1v6h-1zM500 294h1v5h-1zM501 298h1v5h-1zM502 302h1v6h-1zM503 307h1v6h-1zM504 312h1v7h-1zM505 318h1v6h-1zM506 323h1v3h-1zM507 325h1v6h-1zM508 330h1v6h-1zM509 335h1v6h-1zM510 340h1v5h-1zM511 344h1v5h-1zM512 348h1v6h-1zM513 353h1v6h-1zM514 358h1v6h-1zM515 363h1v6h-1zM516 368h1v6h-1zM517 373h1v5h-1zM518 377h1v5h-1zM519 381h1v6h-1zM520 386h1v5h-1zM521 390h1v5h-1zM522 394h1v5h-1zM523 398h1v4h-1zM524 401h1v4h-1zM525 404h1v7h-1zM526 410h1v6h-1zM527 415h1v5h-1zM528 419h1v3h-1zM529 421h1v3h-1zM530 423h1v5h-1zM531 427h1v5h-1zM532 431h1v5h-1zM533 435h1v2h-1zM534 436h1v4h-1zM535 439h1v5h-1zM536 443h1v3h-1zM537 445h1v2h-1zM538 446h1v3h-1zM539 448h1v2h-1zM540 449h1v3h-1zM541 451h1v3h-1zM542 453h1v4h-1zM543 456h1v2h-1zM544 457h1v2h-1zM545 458h1v2h-1zM546 459h1v1h-1zM547 459h1v1h-1zM548 459h1v1h-1zM549 459h1v1h-1zM550 459h1v2h-1zM551 460h1v2h-1zM552 460h1v2h-1zM553 459h1v2h-1zM554 459h1v1h-1zM555 458h1v2h-1zM556 457h1v2h-1zM557 456h1v2h-1zM558 454h1v3h-1zM559 453h1v2h-1zM560 450h1v4h-1zM561 447h1v4h-1zM562 445h1v3h-1zM563 443h1v3h-1zM564 441h1v3h-1zM565 440h1v2h-1zM566 437h1v4h-1zM567 433h1v5h-1zM568 430h1v4h-1zM569 427h1v4h-1zM570 423h1v5h-1zM571 420h1v4h-1zM572 417h1v4h-1zM573 413h1v5h-1zM574 408h1v6h-1zM575 404h1v5h-1zM576 401h1v4h-1zM577 398h1v4h-1zM578 394h1v5h-1zM579 390h1v5h-1zM580 386h1v5h-1zM581 380h1v7h-1zM582 375h1v6h-1zM583 371h1v5h-1zM584 367h1v5h-1zM585 362h1v6h-1zM586 357h1v6h-1zM587 352h1v6h-1zM588 348h1v5h-1zM589 342h1v7h-1zM590 338h1v5h-1zM591 335h1v4h-1zM592 330h1v6h-1zM593 325h1v6h-1zM594 321h1v5h-1zM595 316h1v6h-1zM596 310h1v7h-1zM597 306h1v5h-1zM598 303h1v4h-1zM599 300h1v4h-1zM600 295h1v6h-1zM601 289h1v7h-1zM602 285h1v5h-1zM603 282h1v4h-1zM604 279h1v4h-1zM605 275h1v5h-1zM606 271h1v5h-1zM607 267h1v5h-1zM608 263h1v5h-1zM609 259h1v5h-1zM610 256h1v4h-1zM611 253h1v4h-1zM612 250h1v4h-1zM613 248h1v3h-1zM614 245h1v4h-1zM615 242h1v4h-1zM616 239h1v4h-1zM617 237h1v3h-1zM618 234h1v4h-1zM619 232h1v3h-1zM620 231h1v2h-1zM621 231h1v1h-1zM622 229h1v3h-1zM623 227h1v3h-1zM624 226h1v2h-1zM625 226h1v1h-1zM626 225h1v2h-1zM627 224h1v2h-1zM628 224h1v1h-1zM629 224h1v1h-1zM630 223h1v2h-1zM631 222h1v2h-1zM632 222h1v2h-1zM633 223h1v3h-1zM634 225h1v2h-1zM635 226h1v2h-1zM636 227h1v3h-1zM637 229h1v1h-1zM638 229h1v2h-1zM639 230h1v4h-1zM640 233h1v2h-1zM641 234h1v3h-1zM642 236h1v4h-1zM643 239h1v3h-1zM644 241h1v2h-1zM645 242h1v4h-1zM646 245h1v4h-1zM647 248h1v3h-1zM648 250h1v4h-1zM649 253h1v4h-1zM650 256h1v6h-1zM651 261h1v4h-1zM652 264h1v4h-1zM653 267h1v5h-1zM654 271h1v5h-1zM655 275h1v5h-1zM656 279h1v5h-1zM657 283h1v5h-1zM658 287h1v6h-1zM659 292h1v4h-1zM660 295h1v4h-1zM661 298h1v6h-1zM662 303h1v6h-1zM663 308h1v5h-1zM664 312h1v6h-1zM665 317h1v5h-1zM666 321h1v7h-1zM667 327h1v5h-1zM668 331h1v5h-1zM669 335h1v6h-1zM670 340h1v5h-1zM671 344h1v7h-1zM672 350h1v5h-1zM673 354h1v6h-1zM674 359h1v6h-1zM675 364h1v6h-1zM676 369h1v5h-1zM677 373h1v5h-1zM678 377h1v5h-1zM679 381h1v6h-1zM680 386h1v6h-1zM681 391h1v6h-1zM682 396h1v4h-1zM683 399h1v4h-1zM684 402h1v5h-1zM685 406h1v6h-1zM686 411h1v5h-1zM687 415h1v5h-1zM688 419h1v4h-1zM689 422h1v4h-1zM690 425h1v5h-1zM691 429h1v4h-1zM692 432h1v4h-1zM693 435h1v2h-1zM694 436h1v3h-1zM695 438h1v4h-1zM696 441h1v4h-1zM697 444h1v4h-1zM698 447h1v4h-1zM699 450h1v2h-1zM700 451h1v3h-1zM701 453h1v2h-1zM702 454h1v3h-1zM703 456h1v2h-1zM704 457h1v2h-1zM705 458h1v3h-1zM706 460h1v2h-1zM707 461h1v1h-1zM708 459h1v3h-1zM709 459h1v3h-1zM710 461h1v1h-1zM711 459h1v3h-1zM712 459h1v1h-1zM713 459h1v1h-1zM714 459h1v1h-1zM715 457h1v3h-1zM716 455h1v3h-1zM717 453h1v3h-1zM718 453h1v1h-1zM719 453h1v1h-1zM720 450h1v4h-1zM721 448h1v3h-1zM722 446h1v3h-1zM723 444h1v3h-1zM724 441h1v4h-1zM725 438h1v4h-1zM726 436h1v3h-1zM727 433h1v4h-1zM728 429h1v5h-1zM729 425h1v5h-1zM730 422h1v4h-1zM731 419h1v4h-1zM732 415h1v5h-1zM733 412h1v4h-1zM734 408h1v5h-1zM735 404h1v5h-1zM736 400h1v5h-1zM737 395h1v6h-1zM738 390h1v6h-1zM739 386h1v5h-1zM740 383h1v4h-1zM741 379h1v5h-1zM742 375h1v5h-1zM743 371h1v5h-1zM744 366h1v6h-1zM745 360h1v7h-1zM746 356h1v5h-1zM747 352h1v5h-1zM748 348h1v5h-1zM749 344h1v5h-1zM750 339h1v6h-1zM751 333h1v7h-1zM752 328h1v6h-1zM753 323h1v6h-1zM754 319h1v5h-1zM755 314h1v6h-1zM756 310h1v5h-1zM757 308h1v3h-1zM758 303h1v6h-1zM759 298h1v6h-1zM760 294h1v5h-1zM761 289h1v6h-1zM762 285h1v5h-1zM763 281h1v5h-1zM764 277h1v5h-1zM765 274h1v4h-1zM766 270h1v5h-1zM767 265h1v6h-1zM768 262h1v4h-1zM769 258h1v5h-1zM770 254h1v5h-1zM771 251h1v4h-1zM772 248h1v4h-1zM773 245h1v4h-1zM774 243h1v3h-1zM775 242h1v2h-1zM776 239h1v4h-1zM777 237h1v3h-1zM778 234h1v4h-1zM779 233h1v2h-1zM780 233h1v1h-1zM781 230h1v4h-1zM782 228h1v3h-1zM783 226h1v3h-1zM784 226h1v1h-1zM785 226h1v1h-1zM786 225h1v2h-1zM787 224h1v2h-1zM788 224h1v1h-1zM789 224h1v1h-1zM790 224h1v1h-1zM791 224h1v1h-1zM792 224h1v2h-1zM793 225h1v2h-1zM794 226h1v1h-1zM795 226h1v2h-1zM796 227h1v3h-1zM797 229h1v2h-1zM798 230h1v2h-1zM799 231h1v3h-1zM800 233h1v2h-1zM801 234h1v3h-1zM802 236h1v4h-1zM803 239h1v3h-1zM804 241h1v2h-1zM805 242h1v5h-1zM806 246h1v5h-1zM807 250h1v4h-1zM808 253h1v3h-1zM809 255h1v4h-1zM810 258h1v4h-1zM811 261h1v5h-1zM812 265h1v5h-1zM813 269h1v5h-1zM814 273h1v5h-1zM815 277h1v3h-1zM816 279h1v5h-1zM817 283h1v5h-1zM818 287h1v6h-1zM819 292h1v5h-1zM820 296h1v5h-1zM821 300h1v7h-1zM822 306h1v5h-1zM823 310h1v6h-1zM824 315h1v5h-1zM825 319h1v5h-1zM826 323h1v7h-1zM827 329h1v6h-1zM828 334h1v5h-1z" fill="#00ffff"/><path d="M30 484h1v1h-1zM31 484h1v7h-1zM32 490h1v4h-1zM33 493h1v4h-1zM34 496h1v7h-1zM35 502h1v6h-1zM36 507h1v5h-1zM37 511h1v5h-1zM38 515h1v6h-1zM39 520h1v6h-1zM40 525h1v6h-1zM41 530h1v5h-1zM42 534h1v5h-1zM43 538h1v5h-1zM44 542h1v5h-1zM45 546h1v5h-1zM46 550h1v5h-1zM47 554h1v4h-1zM48 557h1v5h-1zM49 561h1v4h-1zM50 564h1v4h-1zM51 567h1v4h-1zM52 570h1v4h-1zM53 573h1v5h-1zM54 577h1v4h-1zM55 580h1v2h-1zM56 581h1v4h-1zM57 584h1v4h-1zM58 587h1v3h-1zM59 589h1v3h-1zM60 591h1v3h-1zM61 593h1v3h-1zM62 595h1v4h-1zM63 598h1v2h-1zM64 599h1v1h-1zM65 599h1v1h-1zM66 599h1v3h-1zM67 601h1v1h-1zM68 601h1v1h-1zM69 601h1v3h-1zM70 603h1v2h-1zM71 604h1v1h-1zM72 602h1v3h-1zM73 601h1v2h-1zM74 601h1v1h-1zM75 600h1v2h-1zM76 599h1v2h-1zM77 598h1v2h-1zM78 596h1v3h-1zM79 595h1v2h-1zM80 593h1v3h-1zM81 592h1v2h-1zM82 591h1v2h-1zM83 587h1v5h-1zM84 583h1v5h-1zM85 582h1v2h-1zM86 580h1v3h-1zM87 577h1v4h-1zM88 574h1v4h-1zM89 572h1v3h-1zM90 569h1v4h-1zM91 565h1v5h-1zM92 561h1v5h-1zM93 558h1v4h-1zM94 555h1v4h-1zM95 551h1v5h-1zM96 547h1v5h-1zM97 542h1v6h-1zM98 538h1v5h-1zM99 533h1v6h-1zM100 528h1v6h-1zM101 525h1v4h-1zM102 521h1v5h-1zM103 515h1v7h-1zM104 511h1v5h-1zM105 506h1v6h-1zM106 501h1v6h-1zM107 496h1v6h-1zM108 492h1v5h-1zM109 488h1v5h-1zM110 483h1v6h-1zM111 478h1v6h-1zM112 475h1v4h-1zM113 471h1v5h-1zM114 464h1v8h-1zM115 460h1v5h-1zM116 457h1v4h-1zM117 451h1v7h-1zM118 447h1v5h-1zM119 444h1v4h-1zM120 439h1v6h-1zM121 434h1v6h-1zM122 431h1v4h-1zM123 427h1v5h-1zM124 421h1v7h-1zM125 417h1v5h-1zM126 414h1v4h-1zM127 411h1v4h-1zM128 407h1v5h-1zM129 403h1v5h-1zM130 400h1v4h-1zM131 397h1v4h-1zM132 395h1v3h-1zM133 392h1v4h-1zM134 389h1v4h-1zM135 386h1v4h-1zM136 382h1v5h-1zM137 379h1v4h-1zM138 379h1v1h-1zM139 377h1v3h-1zM140 375h1v3h-1zM141 372h1v4h-1zM142 371h1v2h-1zM143 371h1v1h-1zM144 369h1v3h-1zM145 368h1v2h-1zM146 368h1v1h-1zM147 367h1v2h-1zM148 366h1v2h-1zM149 366h1v1h-1zM150 366h1v1h-1zM151 366h1v1h-1zM152 366h1v1h-1zM153 366h1v1h-1zM154 366h1v1h-1zM155 366h1v2h-1zM156 367h1v3h-1zM157 369h1v3h-1zM158 371h1v3h-1zM159 373h1v1h-1zM160 373h1v2h-1zM161 374h1v3h-1zM162 376h1v4h-1zM163 379h1v3h-1zM164 381h1v4h-1zM165 384h1v4h-1zM166 387h1v3h-1zM167 389h1v2h-1zM168 390h1v5h-1zM169 394h1v5h-1zM170 398h1v4h-1zM171 401h1v5h-1zM172 405h1v5h-1zM173 409h1v3h-1zM174 411h1v5h-1zM175 415h1v5h-1zM176 419h1v5h-1zM177 423h1v5h-1zM178 427h1v5h-1zM179 431h1v6h-1zM180 436h1v5h-1zM181 440h1v6h-1zM182 445h1v6h-1zM183 450h1v3h-1zM184 452h1v5h-1zM185 456h1v6h-1zM186 461h1v5h-1zM187 465h1v6h-1zM188 470h1v6h-1zM189 475h1v5h-1zM190 479h1v6h-1zM191 484h1v5h-1zM192 488h1v6h-1zM193 493h1v6h-1zM194 498h1v5h-1zM195 502h1v7h-1zM196 508h1v6h-1zM197 513h1v5h-1zM198 517h1v5h-1zM199 521h1v5h-1zM200 525h1v6h-1zM201 530h1v5h-1zM202 534h1v5h-1zM203 538h1v5h-1zM204 542h1v5h-1zM205 546h1v5h-1zM206 550h1v6h-1zM207 555h1v5h-1zM208 559h1v4h-1zM209 562h1v4h-1zM210 565h1v5h-1zM211 569h1v4h-1zM212 572h1v4h-1zM213 575h1v4h-1zM214 578h1v3h-1zM215 580h1v4h-1zM216 583h1v4h-1zM217 586h1v3h-1zM218 588h1v3h-1zM219 590h1v2h-1zM220 591h1v3h-1zM221 593h1v3h-1zM222 595h1v3h-1zM223 597h1v1h-1zM224 597h1v2h-1zM225 598h1v2h-1zM226 599h1v3h-1zM227 601h1v1h-1zM228 601h1v1h-1zM229 601h1v1h-1zM230 601h1v2h-1zM231 602h1v2h-1zM232 602h1v2h-1zM233 601h1v2h-1zM234 599h1v3h-1zM235 598h1v2h-1zM236 597h1v2h-1zM237 597h1v1h-1zM238 596h1v2h-1zM239 595h1v2h-1zM240 593h1v3h-1zM241 592h1v2h-1zM242 589h1v4h-1zM243 586h1v4h-1zM244 583h1v4h-1zM245 582h1v2h-1zM246 579h1v4h-1zM247 575h1v5h-1zM248 573h1v3h-1zM249 571h1v3h-1zM250 567h1v5h-1zM251 564h1v4h-1zM252 561h1v4h-1zM253 557h1v5h-1zM254 553h1v5h-1zM255 548h1v6h-1zM256 544h1v5h-1zM257 540h1v5h-1zM258 536h1v5h-1zM259 532h1v5h-1zM260 528h1v5h-1zM261 523h1v6h-1zM262 519h1v5h-1zM263 515h1v5h-1zM264 510h1v6h-1zM265 505h1v6h-1zM266 500h1v6h-1zM267 496h1v5h-1zM268 492h1v5h-1zM269 488h1v5h-1zM270 483h1v6h-1zM271 478h1v6h-1zM272 473h1v6h-1zM273 469h1v5h-1zM274 465h1v5h-1zM275 460h1v6h-1zM276 454h1v7h-1zM277 450h1v5h-1zM278 446h1v5h-1zM279 442h1v5h-1zM280 438h1v5h-1zM281 434h1v5h-1zM282 429h1v6h-1zM283 425h1v5h-1zM284 421h1v5h-1zM285 417h1v5h-1zM286 413h1v5h-1zM287 409h1v5h-1zM288 406h1v4h-1zM289 403h1v4h-1zM290 400h1v4h-1zM291 396h1v5h-1zM292 392h1v5h-1zM293 390h1v3h-1zM294 387h1v4h-1zM295 384h1v4h-1zM296 381h1v4h-1zM297 379h1v3h-1zM298 378h1v2h-1zM299 376h1v3h-1zM300 375h1v2h-1zM301 373h1v3h-1zM302 371h1v3h-1zM303 369h1v3h-1zM304 368h1v2h-1zM305 368h1v1h-1zM306 367h1v2h-1zM307 366h1v2h-1zM308 366h1v1h-1zM309 366h1v1h-1zM310 366h1v1h-1zM311 366h1v1h-1zM312 366h1v1h-1zM313 366h1v1h-1zM314 366h1v1h-1zM315 366h1v3h-1zM316 368h1v4h-1zM317 371h1v1h-1zM318 371h1v1h-1zM319 371h1v3h-1zM320 373h1v3h-1zM321 375h1v4h-1zM322 378h1v2h-1zM323 379h1v3h-1zM324 381h1v4h-1zM325 384h1v4h-1zM326 387h1v4h-1zM327 390h1v3h-1zM328 392h1v3h-1zM329 394h1v3h-1zM330 396h1v5h-1zM331 400h1v6h-1zM332 405h1v5h-1zM333 409h1v5h-1zM334 413h1v4h-1zM335 416h1v4h-1zM336 419h1v5h-1zM337 423h1v5h-1zM338 427h1v5h-1zM339 431h1v6h-1zM340 436h1v5h-1zM341 440h1v5h-1zM342 444h1v5h-1zM343 448h1v5h-1zM344 452h1v7h-1zM345 458h1v6h-1zM346 463h1v5h-1zM347 467h1v6h-1zM348 472h1v6h-1zM349 477h1v6h-1zM350 482h1v5h-1zM351 486h1v5h-1zM352 490h1v6h-1zM353 495h1v6h-1zM354 500h1v6h-1zM355 505h1v5h-1zM356 509h1v5h-1zM357 513h1v5h-1zM358 517h1v6h-1zM359 522h1v7h-1zM360 528h1v4h-1zM361 531h1v4h-1zM362 534h1v7h-1zM363 540h1v4h-1zM364 543h1v4h-1zM365 546h1v7h-1zM366 552h1v5h-1zM367 556h1v4h-1zM368 559h1v5h-1zM369 563h1v5h-1zM370 567h1v3h-1zM371 569h1v4h-1zM372 572h1v4h-1zM373 575h1v4h-1zM374 578h1v3h-1zM375 580h1v4h-1zM376 583h1v4h-1zM377 586h1v3h-1zM378 588h1v3h-1zM379 590h1v3h-1zM380 592h1v4h-1zM381 595h1v2h-1zM382 596h1v3h-1zM383 598h1v2h-1zM384 599h1v1h-1zM385 599h1v1h-1zM386 599h1v3h-1zM387 601h1v1h-1zM388 601h1v1h-1zM389 601h1v3h-1zM390 603h1v1h-1zM391 601h1v3h-1zM392 601h1v1h-1zM393 601h1v1h-1zM394 601h1v1h-1zM395 600h1v2h-1zM396 599h1v2h-1zM397 598h1v2h-1zM398 596h1v3h-1zM399 595h1v2h-1zM400 593h1v3h-1zM401 592h1v2h-1zM402 589h1v4h-1zM403 586h1v4h-1zM404 583h1v4h-1zM405 580h1v4h-1zM406 578h1v3h-1zM407 577h1v2h-1zM408 573h1v5h-1zM409 569h1v5h-1zM410 567h1v3h-1zM411 564h1v4h-1zM412 561h1v4h-1zM413 555h1v7h-1zM414 551h1v5h-1zM415 548h1v4h-1zM416 544h1v5h-1zM417 540h1v5h-1zM418 536h1v5h-1zM419 532h1v5h-1zM420 528h1v5h-1zM421 523h1v6h-1zM422 519h1v5h-1zM423 515h1v5h-1zM424 510h1v6h-1zM425 505h1v6h-1zM426 500h1v6h-1zM427 496h1v5h-1zM428 492h1v5h-1zM429 488h1v5h-1zM430 483h1v6h-1zM431 478h1v6h-1zM432 472h1v7h-1zM433 467h1v6h-1zM434 463h1v5h-1zM435 459h1v5h-1zM436 454h1v6h-1zM437 450h1v5h-1zM438 445h1v6h-1zM439 440h1v6h-1zM440 436h1v5h-1zM441 432h1v5h-1zM442 429h1v4h-1zM443 425h1v5h-1zM444 421h1v5h-1zM445 417h1v5h-1zM446 413h1v5h-1zM447 409h1v5h-1zM448 406h1v4h-1zM449 403h1v4h-1zM450 398h1v6h-1zM451 395h1v4h-1zM452 392h1v4h-1zM453 390h1v3h-1zM454 387h1v4h-1zM455 384h1v4h-1zM456 383h1v2h-1zM457 381h1v3h-1zM458 378h1v4h-1zM459 375h1v4h-1zM460 373h1v3h-1zM461 371h1v3h-1zM462 370h1v2h-1zM463 368h1v3h-1zM464 367h1v2h-1zM465 366h1v2h-1zM466 366h1v1h-1zM467 365h1v2h-1zM468 364h1v2h-1zM469 364h1v2h-1zM470 365h1v1h-1zM471 364h1v2h-1zM472 364h1v2h-1zM473 365h1v2h-1zM474 366h1v1h-1zM475 366h1v2h-1zM476 367h1v2h-1zM477 368h1v3h-1zM478 370h1v2h-1zM479 371h1v3h-1zM480 373h1v3h-1zM481 375h1v4h-1zM482 378h1v2h-1zM483 379h1v3h-1zM484 381h1v4h-1zM485 384h1v4h-1zM486 387h1v4h-1zM487 390h1v3h-1zM488 392h1v4h-1zM489 395h1v4h-1zM490 398h1v6h-1zM491 403h1v4h-1zM492 406h1v4h-1zM493 409h1v5h-1zM494 413h1v5h-1zM495 417h1v5h-1zM496 421h1v5h-1zM497 425h1v5h-1zM498 429h1v6h-1zM499 434h1v4h-1zM500 437h1v4h-1zM501 440h1v5h-1zM502 444h1v6h-1zM503 449h1v6h-1zM504 454h1v6h-1zM505 459h1v5h-1zM506 463h1v7h-1zM507 469h1v5h-1zM508 473h1v6h-1zM509 478h1v6h-1zM510 483h1v6h-1zM511 488h1v5h-1zM512 492h1v5h-1zM513 496h1v5h-1zM514 500h1v6h-1zM515 505h1v6h-1zM516 510h1v6h-1zM517 515h1v5h-1zM518 519h1v5h-1zM519 523h1v6h-1zM520 528h1v5h-1zM521 532h1v5h-1zM522 536h1v5h-1zM523 540h1v5h-1zM524 544h1v5h-1zM525 548h1v6h-1zM526 553h1v4h-1zM527 556h1v4h-1zM528 559h1v5h-1zM529 563h1v5h-1zM530 567h1v5h-1zM531 571h1v3h-1zM532 573h1v3h-1zM533 575h1v4h-1zM534 578h1v4h-1zM535 581h1v5h-1zM536 585h1v3h-1zM537 587h1v3h-1zM538 589h1v4h-1zM539 592h1v2h-1zM540 593h1v3h-1zM541 595h1v2h-1zM542 596h1v3h-1zM543 598h1v2h-1zM544 599h1v2h-1zM545 600h1v2h-1zM546 601h1v1h-1zM547 601h1v1h-1zM548 601h1v1h-1zM549 601h1v1h-1zM550 601h1v2h-1zM551 602h1v2h-1zM552 602h1v2h-1zM553 601h1v2h-1zM554 599h1v3h-1zM555 599h1v1h-1zM556 599h1v1h-1zM557 598h1v2h-1zM558 596h1v3h-1zM559 595h1v2h-1zM560 592h1v4h-1zM561 590h1v3h-1zM562 588h1v3h-1zM563 586h1v3h-1zM564 583h1v4h-1zM565 580h1v4h-1zM566 578h1v3h-1zM567 575h1v4h-1zM568 572h1v4h-1zM569 569h1v4h-1zM570 565h1v5h-1zM571 562h1v4h-1zM572 559h1v4h-1zM573 556h1v4h-1zM574 553h1v4h-1zM575 548h1v6h-1zM576 544h1v5h-1zM577 540h1v5h-1zM578 536h1v5h-1zM579 532h1v5h-1zM580 528h1v5h-1zM581 522h1v7h-1zM582 517h1v6h-1zM583 513h1v5h-1zM584 508h1v6h-1zM585 502h1v7h-1zM586 498h1v5h-1zM587 494h1v5h-1zM588 490h1v5h-1zM589 484h1v7h-1zM590 480h1v5h-1zM591 477h1v4h-1zM592 472h1v6h-1zM593 467h1v6h-1zM594 463h1v5h-1zM595 459h1v5h-1zM596 454h1v6h-1zM597 450h1v5h-1zM598 445h1v6h-1zM599 440h1v6h-1zM600 436h1v5h-1zM601 431h1v6h-1zM602 427h1v5h-1zM603 423h1v5h-1zM604 419h1v5h-1zM605 416h1v4h-1zM606 413h1v4h-1zM607 409h1v5h-1zM608 405h1v5h-1zM609 401h1v5h-1zM610 398h1v4h-1zM611 395h1v4h-1zM612 392h1v4h-1zM613 390h1v3h-1zM614 387h1v4h-1zM615 384h1v4h-1zM616 381h1v4h-1zM617 379h1v3h-1zM618 378h1v2h-1zM619 376h1v3h-1zM620 375h1v2h-1zM621 372h1v4h-1zM622 371h1v2h-1zM623 371h1v1h-1zM624 368h1v4h-1zM625 366h1v3h-1zM626 366h1v1h-1zM627 366h1v1h-1zM628 366h1v1h-1zM629 366h1v1h-1zM630 366h1v1h-1zM631 366h1v1h-1zM632 366h1v1h-1zM633 366h1v2h-1zM634 367h1v2h-1zM635 368h1v2h-1zM636 369h1v3h-1zM637 371h1v1h-1zM638 371h1v2h-1zM639 372h1v4h-1zM640 375h1v3h-1zM641 377h1v4h-1zM642 380h1v2h-1zM643 381h1v3h-1zM644 383h1v2h-1zM645 384h1v4h-1zM646 387h1v4h-1zM647 390h1v3h-1zM648 392h1v5h-1zM649 396h1v5h-1zM650 400h1v4h-1zM651 403h1v4h-1zM652 406h1v4h-1zM653 409h1v5h-1zM654 413h1v5h-1zM655 417h1v5h-1zM656 421h1v5h-1zM657 425h1v5h-1zM658 429h1v6h-1zM659 434h1v5h-1zM660 438h1v5h-1zM661 442h1v4h-1zM662 445h1v5h-1zM663 449h1v6h-1zM664 454h1v7h-1zM665 460h1v6h-1zM666 465h1v5h-1zM667 469h1v6h-1zM668 474h1v7h-1zM669 480h1v3h-1zM670 482h1v5h-1zM671 486h1v5h-1zM672 490h1v6h-1zM673 495h1v7h-1zM674 501h1v6h-1zM675 506h1v6h-1zM676 511h1v5h-1zM677 515h1v5h-1zM678 519h1v5h-1zM679 523h1v6h-1zM680 528h1v6h-1zM681 533h1v6h-1zM682 538h1v5h-1zM683 542h1v5h-1zM684 546h1v3h-1zM685 548h1v6h-1zM686 553h1v5h-1zM687 557h1v5h-1zM688 561h1v4h-1zM689 564h1v4h-1zM690 567h1v5h-1zM691 571h1v4h-1zM692 574h1v4h-1zM693 577h1v4h-1zM694 580h1v4h-1zM695 583h1v3h-1zM696 585h1v4h-1zM697 588h1v4h-1zM698 591h1v2h-1zM699 592h1v2h-1zM700 593h1v3h-1zM701 595h1v2h-1zM702 596h1v3h-1zM703 598h1v2h-1zM704 599h1v2h-1zM705 600h1v2h-1zM706 601h1v1h-1zM707 601h1v1h-1zM708 601h1v1h-1zM709 601h1v3h-1zM710 603h1v1h-1zM711 601h1v3h-1zM712 601h1v1h-1zM713 601h1v1h-1zM714 601h1v1h-1zM715 600h1v2h-1zM716 599h1v2h-1zM717 598h1v2h-1zM718 596h1v3h-1zM719 595h1v2h-1zM720 592h1v4h-1zM721 590h1v3h-1zM722 588h1v3h-1zM723 586h1v3h-1zM724 583h1v4h-1zM725 580h1v4h-1zM726 578h1v3h-1zM727 575h1v4h-1zM728 572h1v4h-1zM729 569h1v4h-1zM730 565h1v5h-1zM731 562h1v4h-1zM732 559h1v4h-1zM733 555h1v5h-1zM734 550h1v6h-1zM735 546h1v5h-1zM736 542h1v5h-1zM737 538h1v5h-1zM738 536h1v3h-1zM739 531h1v6h-1zM740 525h1v7h-1zM741 521h1v5h-1zM742 517h1v5h-1zM743 513h1v5h-1zM744 509h1v5h-1zM745 505h1v5h-1zM746 500h1v6h-1zM747 495h1v6h-1zM748 490h1v6h-1zM749 484h1v7h-1zM750 479h1v6h-1zM751 475h1v5h-1zM752 470h1v6h-1zM753 465h1v6h-1zM754 461h1v5h-1zM755 456h1v6h-1zM756 452h1v5h-1zM757 448h1v5h-1zM758 444h1v5h-1zM759 440h1v5h-1zM760 436h1v5h-1zM761 431h1v6h-1zM762 427h1v5h-1zM763 423h1v5h-1zM764 419h1v5h-1zM765 415h1v5h-1zM766 411h1v5h-1zM767 409h1v3h-1zM768 405h1v5h-1zM769 401h1v5h-1zM770 398h1v4h-1zM771 395h1v4h-1zM772 392h1v4h-1zM773 388h1v5h-1zM774 385h1v4h-1zM775 382h1v4h-1zM776 380h1v3h-1zM777 379h1v2h-1zM778 376h1v4h-1zM779 374h1v3h-1zM780 373h1v2h-1zM781 371h1v3h-1zM782 370h1v2h-1zM783 368h1v3h-1zM784 367h1v2h-1zM785 366h1v2h-1zM786 366h1v1h-1zM787 366h1v1h-1zM788 366h1v1h-1zM789 366h1v1h-1zM790 366h1v1h-1zM791 366h1v1h-1zM792 366h1v1h-1zM793 366h1v2h-1zM794 367h1v2h-1zM795 368h1v1h-1zM796 368h1v2h-1zM797 369h1v3h-1zM798 371h1v3h-1zM799 373h1v3h-1zM800 375h1v2h-1zM801 376h1v3h-1zM802 378h1v4h-1zM803 381h1v3h-1zM804 383h1v2h-1zM805 384h1v4h-1zM806 387h1v4h-1zM807 390h1v6h-1zM808 395h1v3h-1zM809 397h1v4h-1zM810 400h1v4h-1zM811 403h1v5h-1zM812 407h1v5h-1zM813 411h1v4h-1zM814 414h1v4h-1zM815 417h1v5h-1zM816 421h1v5h-1zM817 425h1v6h-1zM818 430h1v6h-1zM819 435h1v6h-1zM820 440h1v5h-1zM821 444h1v5h-1zM822 448h1v5h-1zM823 452h1v6h-1zM824 457h1v5h-1zM825 461h1v5h-1zM826 465h1v5h-1zM827 469h1v5h-1zM828 473h1v6h-1z" fill="#ff00ff"/><path d="M30 555h1v1h-1zM31 555h1v5h-1zM32 559h1v6h-1zM33 564h1v6h-1zM34 569h1v5h-1zM35 573h1v7h-1zM36 579h1v6h-1zM37 584h1v5h-1zM38 588h1v5h-1zM39 592h1v5h-1zM40 596h1v6h-1zM41 601h1v5h-1zM42 605h1v5h-1zM43 609h1v5h-1zM44 613h1v5h-1zM45 617h1v4h-1zM46 620h1v4h-1zM47 623h1v5h-1zM48 627h1v6h-1zM49 632h1v4h-1zM50 635h1v4h-1zM51 638h1v5h-1zM52 642h1v5h-1zM53 646h1v4h-1zM54 649h1v3h-1zM55 651h1v4h-1zM56 654h1v3h-1zM57 656h1v3h-1zM58 658h1v3h-1zM59 660h1v3h-1zM60 662h1v3h-1zM61 664h1v2h-1zM62 665h1v3h-1zM63 667h1v4h-1zM64 670h1v1h-1zM65 670h1v1h-1zM66 670h1v1h-1zM67 670h1v2h-1zM68 671h1v2h-1zM69 672h1v1h-1zM70 672h1v1h-1zM71 672h1v1h-1zM72 672h1v1h-1zM73 672h1v1h-1zM74 672h1v1h-1zM75 671h1v2h-1zM76 670h1v2h-1zM77 669h1v2h-1zM78 667h1v3h-1zM79 666h1v2h-1zM80 664h1v3h-1zM81 663h1v2h-1zM82 660h1v4h-1zM83 658h1v3h-1zM84 656h1v3h-1zM85 654h1v3h-1zM86 651h1v4h-1zM87 648h1v4h-1zM88 645h1v4h-1zM89 643h1v3h-1zM90 640h1v4h-1zM91 636h1v5h-1zM92 632h1v5h-1zM93 628h1v5h-1zM94 624h1v5h-1zM95 622h1v3h-1zM96 616h1v7h-1zM97 612h1v5h-1zM98 609h1v4h-1zM99 605h1v5h-1zM100 601h1v5h-1zM101 597h1v5h-1zM102 592h1v6h-1zM103 586h1v7h-1zM104 582h1v5h-1zM105 578h1v5h-1zM106 574h1v5h-1zM107 570h1v5h-1zM108 565h1v6h-1zM109 560h1v6h-1zM110 555h1v6h-1zM111 551h1v5h-1zM112 545h1v7h-1zM113 540h1v6h-1zM114 536h1v5h-1zM115 532h1v5h-1zM116 528h1v5h-1zM117 523h1v6h-1zM118 519h1v5h-1zM119 513h1v7h-1zM120 509h1v5h-1zM121 505h1v5h-1zM122 500h1v6h-1zM123 496h1v5h-1zM124 492h1v5h-1zM125 488h1v5h-1zM126 485h1v4h-1zM127 482h1v4h-1zM128 478h1v5h-1zM129 474h1v5h-1zM130 471h1v4h-1zM131 468h1v4h-1zM132 466h1v3h-1zM133 461h1v6h-1zM134 459h1v3h-1zM135 457h1v3h-1zM136 455h1v3h-1zM137 452h1v4h-1zM138 449h1v4h-1zM139 446h1v4h-1zM140 444h1v3h-1zM141 444h1v1h-1zM142 443h1v2h-1zM143 442h1v2h-1zM144 440h1v3h-1zM145 439h1v2h-1zM146 439h1v1h-1zM147 438h1v2h-1zM148 437h1v2h-1zM149 437h1v1h-1zM150 437h1v1h-1zM151 437h1v1h-1zM152 437h1v1h-1zM153 437h1v1h-1zM154 437h1v1h-1zM155 437h1v2h-1zM156 438h1v2h-1zM157 439h1v3h-1zM158 441h1v2h-1zM159 442h1v3h-1zM160 444h1v3h-1zM161 446h1v4h-1zM162 449h1v2h-1zM163 450h1v2h-1zM164 451h1v3h-1zM165 453h1v5h-1zM166 457h1v4h-1zM167 460h1v2h-1zM168 461h1v4h-1zM169 464h1v4h-1zM170 467h1v5h-1zM171 471h1v6h-1zM172 476h1v5h-1zM173 480h1v3h-1zM174 482h1v5h-1zM175 486h1v5h-1zM176 490h1v4h-1zM177 493h1v4h-1zM178 496h1v7h-1zM179 502h1v6h-1zM180 507h1v5h-1zM181 511h1v5h-1zM182 515h1v5h-1zM183 519h1v5h-1zM184 523h1v5h-1zM185 527h1v6h-1zM186 532h1v6h-1zM187 537h1v6h-1zM188 542h1v5h-1zM189 546h1v5h-1zM190 550h1v6h-1zM191 555h1v7h-1zM192 561h1v5h-1zM193 565h1v5h-1zM194 569h1v5h-1zM195 573h1v7h-1zM196 579h1v6h-1zM197 584h1v5h-1zM198 588h1v5h-1zM199 592h1v5h-1zM200 596h1v6h-1zM201 601h1v5h-1zM202 605h1v5h-1zM203 609h1v5h-1zM204 613h1v5h-1zM205 617h1v5h-1zM206 621h1v6h-1zM207 626h1v5h-1zM208 630h1v4h-1zM209 633h1v4h-1zM210 636h1v7h-1zM211 642h1v3h-1zM212 644h1v3h-1zM213 646h1v4h-1zM214 649h1v3h-1zM215 651h1v4h-1zM216 654h1v3h-1zM217 656h1v3h-1zM218 658h1v3h-1zM219 660h1v4h-1zM220 663h1v4h-1zM221 666h1v2h-1zM222 667h1v3h-1zM223 669h1v2h-1zM224 670h1v2h-1zM225 671h1v2h-1zM226 672h1v1h-1zM227 672h1v1h-1zM228 672h1v1h-1zM229 672h1v3h-1zM230 674h1v1h-1zM231 674h1v1h-1zM232 673h1v2h-1zM233 672h1v2h-1zM234 672h1v1h-1zM235 671h1v2h-1zM236 670h1v2h-1zM237 669h1v2h-1zM238 667h1v3h-1zM239 666h1v2h-1zM240 664h1v3h-1zM241 663h1v2h-1zM242 662h1v2h-1zM243 659h1v4h-1zM244 656h1v4h-1zM245 654h1v3h-1zM246 651h1v4h-1zM247 648h1v4h-1zM248 644h1v5h-1zM249 640h1v5h-1zM250 638h1v3h-1zM251 635h1v4h-1zM252 632h1v4h-1zM253 628h1v5h-1zM254 624h1v5h-1zM255 619h1v6h-1zM256 615h1v5h-1zM257 611h1v5h-1zM258 607h1v5h-1zM259 603h1v5h-1zM260 599h1v5h-1zM261 594h1v6h-1zM262 590h1v5h-1zM263 586h1v5h-1zM264 582h1v5h-1zM265 578h1v5h-1zM266 574h1v5h-1zM267 569h1v6h-1zM268 563h1v7h-1zM269 557h1v7h-1zM270 553h1v5h-1zM271 551h1v3h-1zM272 545h1v7h-1zM273 540h1v6h-1zM274 534h1v7h-1zM275 530h1v5h-1zM276 525h1v6h-1zM277 521h1v5h-1zM278 517h1v5h-1zM279 513h1v5h-1zM280 509h1v5h-1zM281 505h1v5h-1zM282 500h1v6h-1zM283 497h1v4h-1zM284 494h1v4h-1zM285 489h1v6h-1zM286 484h1v6h-1zM287 480h1v5h-1zM288 478h1v3h-1zM289 475h1v4h-1zM290 470h1v6h-1zM291 466h1v5h-1zM292 463h1v4h-1zM293 461h1v3h-1zM294 458h1v4h-1zM295 455h1v4h-1zM296 452h1v4h-1zM297 450h1v3h-1zM298 449h1v2h-1zM299 447h1v3h-1zM300 446h1v2h-1zM301 444h1v3h-1zM302 443h1v2h-1zM303 442h1v2h-1zM304 440h1v3h-1zM305 439h1v2h-1zM306 438h1v2h-1zM307 437h1v2h-1zM308 437h1v1h-1zM309 436h1v2h-1zM310 436h1v1h-1zM311 436h1v2h-1zM312 437h1v1h-1zM313 437h1v2h-1zM314 438h1v2h-1zM315 439h1v1h-1zM316 439h1v1h-1zM317 439h1v3h-1zM318 441h1v2h-1zM319 442h1v3h-1zM320 444h1v3h-1zM321 446h1v4h-1zM322 449h1v2h-1zM323 450h1v3h-1zM324 452h1v4h-1zM325 455h1v2h-1zM326 456h1v4h-1zM327 459h1v5h-1zM328 463h1v4h-1zM329 466h1v4h-1zM330 469h1v4h-1zM331 472h1v5h-1zM332 476h1v5h-1zM333 480h1v5h-1zM334 484h1v4h-1zM335 487h1v4h-1zM336 490h1v5h-1zM337 494h1v5h-1zM338 498h1v5h-1zM339 502h1v6h-1zM340 507h1v5h-1zM341 511h1v5h-1zM342 515h1v5h-1zM343 519h1v5h-1zM344 523h1v7h-1zM345 529h1v6h-1zM346 534h1v5h-1zM347 538h1v5h-1zM348 542h1v5h-1zM349 546h1v7h-1zM350 552h1v6h-1zM351 557h1v5h-1zM352 561h1v6h-1zM353 566h1v6h-1zM354 571h1v6h-1zM355 576h1v6h-1zM356 581h1v6h-1zM357 586h1v4h-1zM358 589h1v5h-1zM359 593h1v7h-1zM360 599h1v5h-1zM361 603h1v5h-1zM362 607h1v3h-1zM363 609h1v5h-1zM364 613h1v5h-1zM365 617h1v5h-1zM366 621h1v6h-1zM367 626h1v5h-1zM368 630h1v5h-1zM369 634h1v5h-1zM370 638h1v3h-1zM371 640h1v4h-1zM372 643h1v4h-1zM373 646h1v4h-1zM374 649h1v3h-1zM375 651h1v4h-1zM376 654h1v4h-1zM377 657h1v4h-1zM378 660h1v4h-1zM379 663h1v1h-1zM380 663h1v2h-1zM381 664h1v2h-1zM382 665h1v3h-1zM383 667h1v4h-1zM384 670h1v2h-1zM385 671h1v2h-1zM386 672h1v1h-1zM387 672h1v2h-1zM388 673h1v2h-1zM389 673h1v2h-1zM390 672h1v2h-1zM391 672h1v1h-1zM392 672h1v3h-1zM393 674h1v1h-1zM394 671h1v4h-1zM395 670h1v2h-1zM396 670h1v1h-1zM397 669h1v2h-1zM398 667h1v3h-1zM399 666h1v2h-1zM400 664h1v3h-1zM401 663h1v2h-1zM402 660h1v4h-1zM403 657h1v4h-1zM404 654h1v4h-1zM405 651h1v4h-1zM406 649h1v3h-1zM407 646h1v4h-1zM408 643h1v4h-1zM409 640h1v4h-1zM410 638h1v3h-1zM411 634h1v5h-1zM412 630h1v5h-1zM413 627h1v4h-1zM414 624h1v4h-1zM415 619h1v6h-1zM416 615h1v5h-1zM417 611h1v5h-1zM418 607h1v5h-1zM419 603h1v5h-1zM420 599h1v5h-1zM421 594h1v6h-1zM422 590h1v5h-1zM423 586h1v5h-1zM424 582h1v5h-1zM425 577h1v6h-1zM426 572h1v6h-1zM427 567h1v6h-1zM428 563h1v5h-1zM429 559h1v5h-1zM430 554h1v6h-1zM431 549h1v6h-1zM432 543h1v7h-1zM433 538h1v6h-1zM434 534h1v5h-1zM435 530h1v5h-1zM436 525h1v6h-1zM437 521h1v5h-1zM438 516h1v6h-1zM439 511h1v6h-1zM440 508h1v4h-1zM441 504h1v5h-1zM442 499h1v6h-1zM443 495h1v5h-1zM444 492h1v4h-1zM445 488h1v5h-1zM446 484h1v5h-1zM447 480h1v5h-1zM448 476h1v5h-1zM449 472h1v5h-1zM450 469h1v4h-1zM451 466h1v4h-1zM452 463h1v4h-1zM453 461h1v3h-1zM454 458h1v4h-1zM455 455h1v4h-1zM456 452h1v4h-1zM457 450h1v3h-1zM458 449h1v2h-1zM459 447h1v3h-1zM460 446h1v2h-1zM461 443h1v4h-1zM462 441h1v3h-1zM463 439h1v3h-1zM464 439h1v1h-1zM465 439h1v1h-1zM466 438h1v2h-1zM467 437h1v2h-1zM468 437h1v1h-1zM469 437h1v1h-1zM470 437h1v1h-1zM471 437h1v1h-1zM472 437h1v1h-1zM473 437h1v1h-1zM474 437h1v1h-1zM475 437h1v3h-1zM476 439h1v4h-1zM477 442h1v2h-1zM478 443h1v2h-1zM479 444h1v3h-1zM480 446h1v2h-1zM481 447h1v3h-1zM482 449h1v4h-1zM483 452h1v3h-1zM484 454h1v2h-1zM485 455h1v4h-1zM486 458h1v4h-1zM487 461h1v6h-1zM488 466h1v2h-1zM489 467h1v3h-1zM490 469h1v6h-1zM491 474h1v4h-1zM492 477h1v4h-1zM493 480h1v5h-1zM494 484h1v5h-1zM495 488h1v5h-1zM496 492h1v4h-1zM497 495h1v4h-1zM498 498h1v5h-1zM499 502h1v6h-1zM500 507h1v5h-1zM501 511h1v5h-1zM502 515h1v6h-1zM503 520h1v6h-1zM504 525h1v6h-1zM505 530h1v5h-1zM506 534h1v7h-1zM507 540h1v5h-1zM508 544h1v5h-1zM509 548h1v6h-1zM510 553h1v5h-1zM511 557h1v5h-1zM512 561h1v6h-1zM513 566h1v6h-1zM514 571h1v6h-1zM515 576h1v5h-1zM516 580h1v5h-1zM517 584h1v7h-1zM518 590h1v5h-1zM519 594h1v6h-1zM520 599h1v5h-1zM521 603h1v5h-1zM522 607h1v5h-1zM523 611h1v5h-1zM524 615h1v5h-1zM525 619h1v6h-1zM526 624h1v4h-1zM527 627h1v4h-1zM528 630h1v5h-1zM529 634h1v5h-1zM530 638h1v5h-1zM531 642h1v4h-1zM532 645h1v4h-1zM533 648h1v2h-1zM534 649h1v3h-1zM535 651h1v4h-1zM536 654h1v4h-1zM537 657h1v4h-1zM538 660h1v4h-1zM539 663h1v2h-1zM540 664h1v3h-1zM541 666h1v2h-1zM542 667h1v3h-1zM543 669h1v2h-1zM544 670h1v2h-1zM545 671h1v2h-1zM546 672h1v1h-1zM547 672h1v1h-1zM548 672h1v1h-1zM549 672h1v1h-1zM550 672h1v1h-1zM551 672h1v1h-1zM552 672h1v3h-1zM553 674h1v1h-1zM554 671h1v4h-1zM555 670h1v2h-1zM556 670h1v1h-1zM557 670h1v1h-1zM558 669h1v2h-1zM559 666h1v4h-1zM560 664h1v3h-1zM561 663h1v2h-1zM562 660h1v4h-1zM563 657h1v4h-1zM564 654h1v4h-1zM565 651h1v4h-1zM566 649h1v3h-1zM567 646h1v4h-1zM568 643h1v4h-1zM569 640h1v4h-1zM570 638h1v3h-1zM571 635h1v4h-1zM572 632h1v4h-1zM573 628h1v5h-1zM574 623h1v6h-1zM575 617h1v7h-1zM576 614h1v4h-1zM577 611h1v4h-1zM578 607h1v5h-1zM579 602h1v6h-1zM580 597h1v6h-1zM581 594h1v4h-1zM582 590h1v5h-1zM583 584h1v7h-1zM584 580h1v5h-1zM585 575h1v6h-1zM586 570h1v6h-1zM587 565h1v6h-1zM588 561h1v5h-1zM589 557h1v5h-1zM590 552h1v6h-1zM591 546h1v7h-1zM592 542h1v5h-1zM593 538h1v5h-1zM594 534h1v5h-1zM595 530h1v5h-1zM596 525h1v6h-1zM597 520h1v6h-1zM598 515h1v6h-1zM599 511h1v5h-1zM600 507h1v5h-1zM601 503h1v5h-1zM602 500h1v4h-1zM603 496h1v5h-1zM604 492h1v5h-1zM605 486h1v7h-1zM606 482h1v5h-1zM607 480h1v3h-1zM608 476h1v5h-1zM609 472h1v5h-1zM610 469h1v4h-1zM611 465h1v5h-1zM612 461h1v5h-1zM613 458h1v4h-1zM614 456h1v3h-1zM615 455h1v2h-1zM616 452h1v4h-1zM617 450h1v3h-1zM618 447h1v4h-1zM619 445h1v3h-1zM620 444h1v2h-1zM621 442h1v3h-1zM622 441h1v2h-1zM623 439h1v3h-1zM624 438h1v2h-1zM625 437h1v2h-1zM626 437h1v1h-1zM627 437h1v1h-1zM628 437h1v1h-1zM629 436h1v2h-1zM630 436h1v1h-1zM631 436h1v2h-1zM632 437h1v1h-1zM633 437h1v2h-1zM634 438h1v2h-1zM635 439h1v1h-1zM636 439h1v1h-1zM637 439h1v3h-1zM638 441h1v3h-1zM639 443h1v4h-1zM640 446h1v2h-1zM641 447h1v3h-1zM642 449h1v2h-1zM643 450h1v3h-1zM644 452h1v4h-1zM645 455h1v4h-1zM646 458h1v4h-1zM647 461h1v6h-1zM648 466h1v3h-1zM649 468h1v5h-1zM650 472h1v5h-1zM651 476h1v4h-1zM652 479h1v4h-1zM653 482h1v4h-1zM654 485h1v4h-1zM655 488h1v5h-1zM656 492h1v5h-1zM657 496h1v5h-1zM658 500h1v4h-1zM659 503h1v6h-1zM660 508h1v6h-1zM661 513h1v5h-1zM662 517h1v5h-1zM663 521h1v5h-1zM664 525h1v7h-1zM665 531h1v6h-1zM666 536h1v5h-1zM667 540h1v6h-1zM668 545h1v7h-1zM669 551h1v5h-1zM670 555h1v5h-1zM671 559h1v5h-1zM672 563h1v7h-1zM673 569h1v5h-1zM674 573h1v4h-1zM675 576h1v6h-1zM676 581h1v6h-1zM677 586h1v7h-1zM678 592h1v5h-1zM679 596h1v4h-1zM680 599h1v5h-1zM681 603h1v5h-1zM682 607h1v7h-1zM683 613h1v5h-1zM684 617h1v3h-1zM685 619h1v6h-1zM686 624h1v5h-1zM687 628h1v5h-1zM688 632h1v4h-1zM689 635h1v4h-1zM690 638h1v3h-1zM691 640h1v5h-1zM692 644h1v5h-1zM693 648h1v4h-1zM694 651h1v3h-1zM695 653h1v2h-1zM696 654h1v4h-1zM697 657h1v4h-1zM698 660h1v4h-1zM699 663h1v2h-1zM700 664h1v3h-1zM701 666h1v2h-1zM702 667h1v3h-1zM703 669h1v4h-1zM704 672h1v1h-1zM705 672h1v1h-1zM706 672h1v1h-1zM707 672h1v2h-1zM708 673h1v2h-1zM709 673h1v2h-1zM710 673h1v1h-1zM711 673h1v2h-1zM712 673h1v2h-1zM713 672h1v2h-1zM714 670h1v3h-1zM715 669h1v2h-1zM716 668h1v2h-1zM717 666h1v3h-1zM718 665h1v2h-1zM719 664h1v2h-1zM720 662h1v3h-1zM721 661h1v2h-1zM722 659h1v3h-1zM723 657h1v3h-1zM724 654h1v4h-1zM725 651h1v4h-1zM726 649h1v3h-1zM727 646h1v4h-1zM728 643h1v4h-1zM729 640h1v4h-1zM730 636h1v5h-1zM731 633h1v4h-1zM732 630h1v4h-1zM733 626h1v5h-1zM734 621h1v6h-1zM735 617h1v5h-1zM736 613h1v5h-1zM737 609h1v5h-1zM738 605h1v5h-1zM739 601h1v5h-1zM740 596h1v6h-1zM741 592h1v5h-1zM742 588h1v5h-1zM743 584h1v5h-1zM744 579h1v6h-1zM745 573h1v7h-1zM746 569h1v5h-1zM747 565h1v5h-1zM748 561h1v5h-1zM749 557h1v5h-1zM750 552h1v6h-1zM751 546h1v7h-1zM752 542h1v5h-1zM753 537h1v6h-1zM754 532h1v6h-1zM755 527h1v6h-1zM756 523h1v5h-1zM757 519h1v5h-1zM758 515h1v5h-1zM759 511h1v5h-1zM760 507h1v5h-1zM761 502h1v6h-1zM762 496h1v7h-1zM763 493h1v4h-1zM764 490h1v4h-1zM765 486h1v5h-1zM766 482h1v5h-1zM767 477h1v6h-1zM768 475h1v3h-1zM769 472h1v4h-1zM770 469h1v4h-1zM771 465h1v5h-1zM772 461h1v5h-1zM773 458h1v4h-1zM774 456h1v3h-1zM775 453h1v4h-1zM776 451h1v3h-1zM777 450h1v2h-1zM778 447h1v4h-1zM779 445h1v3h-1zM780 444h1v2h-1zM781 442h1v3h-1zM782 442h1v1h-1zM783 442h1v1h-1zM784 440h1v3h-1zM785 439h1v2h-1zM786 438h1v2h-1zM787 437h1v2h-1zM788 437h1v1h-1zM789 437h1v1h-1zM790 437h1v1h-1zM791 437h1v1h-1zM792 437h1v1h-1zM793 437h1v2h-1zM794 438h1v2h-1zM795 439h1v2h-1zM796 440h1v3h-1zM797 442h1v2h-1zM798 443h1v2h-1zM799 444h1v3h-1zM800 446h1v2h-1zM801 447h1v3h-1zM802 449h1v2h-1zM803 450h1v3h-1zM804 452h1v4h-1zM805 455h1v5h-1zM806 459h1v5h-1zM807 463h1v4h-1zM808 466h1v3h-1zM809 468h1v4h-1zM810 471h1v4h-1zM811 474h1v5h-1zM812 478h1v5h-1zM813 482h1v4h-1zM814 485h1v5h-1zM815 489h1v6h-1zM816 494h1v6h-1zM817 499h1v5h-1zM818 503h1v5h-1zM819 507h1v5h-1zM820 511h1v5h-1zM821 515h1v5h-1zM822 519h1v5h-1zM823 523h1v6h-1zM824 528h1v5h-1zM825 532h1v5h-1zM826 536h1v7h-1zM827 542h1v6h-1zM828 547h1v5h-1z" fill="#00ff00"/></svg>
<svg style="left:11px;top:275px" width="19" height="12" viewBox="0 0 19 12"><path d="M1 0H13L18.200 5.500L13 11H1Z" fill="#ffff00"/><text x="8" y="9.500" text-anchor="middle" text-rendering="geometricPrecision" font-family="Liberation Sans,sans-serif" font-size="11" fill="#101000">1</text></svg>
<svg style="left:11px;top:346px" width="19" height="12" viewBox="0 0 19 12"><path d="M1 0H13L18.200 5.500L13 11H1Z" fill="#00ffff"/><text x="8" y="9.500" text-anchor="middle" text-rendering="geometricPrecision" font-family="Liberation Sans,sans-serif" font-size="11" fill="#101000">2</text></svg>
<svg style="left:11px;top:488px" width="19" height="12" viewBox="0 0 19 12"><path d="M1 0H13L18.200 5.500L13 11H1Z" fill="#ff00ff"/><text x="8" y="9.500" text-anchor="middle" text-rendering="geometricPrecision" font-family="Liberation Sans,sans-serif" font-size="11" fill="#101000">3</text></svg>
<svg style="left:11px;top:559px" width="19" height="12" viewBox="0 0 19 12"><path d="M1 0H13L18.200 5.500L13 11H1Z" fill="#00ff00"/><text x="8" y="9.500" text-anchor="middle" text-rendering="geometricPrecision" font-family="Liberation Sans,sans-serif" font-size="11" fill="#101000">4</text></svg>
<svg style="left:830px;top:274px" width="19" height="13" viewBox="0 0 19 13"><path d="M18 1H6.500L1 6.500L6.500 12H18Z" fill="#ffff00"/><text x="12" y="10.500" text-anchor="middle" font-family="Liberation Sans,sans-serif" font-size="11" fill="#202000">T</text></svg>
<div style="left:31px;top:709px;width:92px;height:19px;background:#000"></div>
<div style="left:32px;top:711px;width:27px;height:15px;background:#ffff00"></div>
<div class="t ar" style="left:33px;top:712px;line-height:15px;color:#000;font-size:12px">CH1</div>
<svg style="left:61px;top:714.500px" width="9" height="9" viewBox="0 0 10 9" preserveAspectRatio="none"><path d="M.6 5.500C1 1.500 3.400 1 5 4.500S9 7.500 9.400 3.500" fill="none" stroke="#ffff00" stroke-width="1.100"/></svg>
<div class="t ar" style="left:76.5px;top:712px;line-height:15px;color:#ffff00;font-size:12px">200mV</div>
<div style="left:141px;top:709px;width:92px;height:19px;background:#000"></div>
<div class="t ar" style="left:143px;top:712px;line-height:15px;color:#00ffff;font-size:12px">CH2</div>
<svg style="left:171px;top:714.500px" width="9" height="9" viewBox="0 0 10 9" preserveAspectRatio="none"><path d="M.6 5.500C1 1.500 3.400 1 5 4.500S9 7.500 9.400 3.500" fill="none" stroke="#00ffff" stroke-width="1.100"/></svg>
<div class="t ar" style="left:186.5px;top:712px;line-height:15px;color:#00ffff;font-size:12px">200mV</div>
<div style="left:251px;top:709px;width:92px;height:19px;background:#000"></div>
<div class="t ar" style="left:253px;top:712px;line-height:15px;color:#ff00ff;font-size:12px">CH3</div>
<svg style="left:281px;top:714.500px" width="9" height="9" viewBox="0 0 10 9" preserveAspectRatio="none"><path d="M.6 5.500C1 1.500 3.400 1 5 4.500S9 7.500 9.400 3.500" fill="none" stroke="#ff00ff" stroke-width="1.100"/></svg>
<div class="t ar" style="left:296.5px;top:712px;line-height:15px;color:#ff00ff;font-size:12px">200mV</div>
<div style="left:361px;top:709px;width:92px;height:19px;background:#000"></div>
<div class="t ar" style="left:363px;top:712px;line-height:15px;color:#00ff00;font-size:12px">CH4</div>
<svg style="left:391px;top:714.500px" width="9" height="9" viewBox="0 0 10 9" preserveAspectRatio="none"><path d="M.6 5.500C1 1.500 3.400 1 5 4.500S9 7.500 9.400 3.500" fill="none" stroke="#00ff00" stroke-width="1.100"/></svg>
<div class="t ar" style="left:406.5px;top:712px;line-height:15px;color:#00ff00;font-size:12px">200mV</div>
<div style="left:738px;top:709px;width:90px;height:19px;background:#000"></div>
<div class="t ar" style="left:741px;top:712px;line-height:15px;color:#ff8000;font-size:12px;letter-spacing:.2px">Time: 20.00us</div>
<div style="left:851px;top:92px;width:192px;height:1px;background:#ffffff"></div>
<div style="left:849px;top:91px;width:2px;height:2px;background:#ffffff"></div>
<div class="t song" style="left:878px;top:100px;line-height:14px">联机:</div>
<div style="left:909px;top:97px;width:21px;height:21px;border-radius:50%;background:#a0a0a0;border:1px solid #808080"></div>
<div style="left:852px;top:121px;width:191px;height:1px;background:#7f858d"></div>
<div style="left:851px;top:121px;width:1px;height:612px;background:#8a9199"></div>
<div style="left:849px;top:93px;width:2px;height:640px;background:#fff"></div>
<div style="left:1030px;top:122px;width:13px;height:611px;background:linear-gradient(90deg,#e9e9e9 0,#f3f3f3 30%,#f7f7f7 100%);border-left:1px solid #dcdcdc"></div>
<svg style="left:1035px;top:128px" width="8" height="5" viewBox="0 0 8 5"><path d="M.3 4.600L4 .6L7.700 4.600Z" fill="#3c3c3c"/></svg>
<div style="left:1030px;top:140px;width:13px;height:445px;border:1px solid #979797;border-right:none;border-radius:2px 0 0 2px;background:linear-gradient(90deg,#f6f6f6 0,#efefef 35%,#e4e4e4 60%,#cfcfcf 100%);box-shadow:inset 1px 1px 0 #fff"></div>
<div style="left:1034px;top:358px;width:7px;height:1px;background:#5a5a5a"></div>
<div style="left:1034px;top:359px;width:7px;height:1px;background:#f8f8f8"></div>
<div style="left:1034px;top:361px;width:7px;height:1px;background:#5a5a5a"></div>
<div style="left:1034px;top:362px;width:7px;height:1px;background:#f8f8f8"></div>
<div style="left:1034px;top:364px;width:7px;height:1px;background:#5a5a5a"></div>
<div style="left:1034px;top:365px;width:7px;height:1px;background:#f8f8f8"></div>
<div class="grp" style="left:857px;top:133px;width:168px;height:111px;"></div>
<div class="t song grplabel" style="left:864px;top:126px;line-height:14px">水平</div>
<div class="t song" style="left:860px;top:147px;line-height:14px">秒 / 格</div>
<div class="combo" style="left:860px;top:166px;width:68px;height:22px;"></div>
<div class="t" style="left:864px;top:170px;line-height:14px;font-size:11px;color:#000">20.00us</div>
<div class="arrow" style="left:915px;top:175px"></div>
<div class="t song" style="left:860px;top:194px;line-height:14px">格式</div>
<div class="combo" style="left:860px;top:215px;width:68px;height:22px;"></div>
<div class="t" style="left:864px;top:219px;line-height:14px;font-size:11px;color:#000">Y - T</div>
<div class="arrow" style="left:915px;top:224px"></div>
<svg style="left:934.2px;top:156.9px" width="84" height="84" viewBox="934.2 156.9 84 84"><defs><linearGradient id="kr0000cc" x1="0" y1="0" x2="1" y2="1"><stop offset="0" stop-color="#c4c4c4"/><stop offset=".5" stop-color="#a0a0a0"/><stop offset="1" stop-color="#7c7c7c"/></linearGradient></defs><path d="M948.99 224.27A37.200 37.200 0 1 1 1003.41 224.27" fill="#fff" stroke="#1a1a1a" stroke-width="1"/><circle cx="976.2" cy="198.9" r="34.700" fill="url(#kr0000cc)" stroke="#555" stroke-width=".8"/><circle cx="976.2" cy="199.20000000000002" r="28" fill="#0000cc" stroke="#00008c" stroke-width="2"/><path d="M981 193.6L992 181.6" stroke="#ece4c0" stroke-width="1.900" stroke-linecap="round"/><path d="M944.9000000000001 229.70000000000002L951.6 223.9M1007.5 229.70000000000002L1000.8000000000001 223.9" stroke="#000" stroke-width="1.100"/></svg>
<div class="grp" style="left:857px;top:258px;width:168px;height:150px;"></div>
<div class="t song grplabel" style="left:864px;top:251px;line-height:14px">垂直</div>
<div class="combo" style="left:860px;top:274px;width:68px;height:22px;"></div>
<div class="t" style="left:864px;top:278px;line-height:14px;font-size:11px;color:#000">CH1</div>
<div class="arrow" style="left:915px;top:283px"></div>
<div style="left:933px;top:276px;width:13px;height:13px;border:1px solid #8e8f8f;background:linear-gradient(135deg,#d8d8d8,#fbfbfb)"></div>
<div style="left:935px;top:278px;width:9px;height:9px;border:1px solid #c4c4c4;background:linear-gradient(135deg,#e6e6e6,#ffffff)"></div>
<svg style="left:934px;top:277px" width="11" height="11" viewBox="0 0 11 11"><path d="M2.200 5.200L4.400 8.600L8.900 1.800" fill="none" stroke="#3a4a9a" stroke-width="1.700"/></svg>
<div class="t song" style="left:949px;top:276px;line-height:14px">开/关</div>
<div style="left:860px;top:302px;width:68px;height:21px;border:1px solid #d4d4d4;border-top-color:#b4b4b4;border-left-color:#cfcfcf;background:#f3f3f3;box-shadow:inset 0 0 0 1px #fafafa"></div>
<div class="t" style="left:864px;top:305px;line-height:14px;font-size:11px">200mV</div>
<div style="left:910px;top:302px;width:18px;height:10px;border:1px solid #a8a8a8;background:linear-gradient(180deg,#f6f6f6,#e6e6e6)"></div>
<div style="left:910px;top:312px;width:18px;height:10px;border:1px solid #a8a8a8;background:linear-gradient(180deg,#f4f4f4,#e2e2e2)"></div>
<svg style="left:910px;top:302px" width="18" height="20" viewBox="0 0 18 20"><path d="M6 6.800L9 3.600L12 6.800Z M6 13.400L9 16.600L12 13.400Z" fill="#3b56a8"/></svg>
<div class="combo dis" style="left:860px;top:330px;width:68px;height:21px;"></div>
<div class="t" style="left:864px;top:334px;line-height:14px;font-size:11px;color:#8a8a8a"><span class="song" style="position:static;font-size:12px">交流</span></div>
<div class="arrow dis" style="left:915px;top:339px"></div>
<div class="combo dis" style="left:860px;top:357px;width:68px;height:22px;"></div>
<div class="t" style="left:864px;top:361px;line-height:14px;font-size:11px;color:#8a8a8a">x1</div>
<div class="arrow dis" style="left:915px;top:366px"></div>
<svg style="left:934.9px;top:296.8px" width="84" height="84" viewBox="934.9 296.8 84 84"><defs><linearGradient id="krffff00" x1="0" y1="0" x2="1" y2="1"><stop offset="0" stop-color="#c4c4c4"/><stop offset=".5" stop-color="#a0a0a0"/><stop offset="1" stop-color="#7c7c7c"/></linearGradient></defs><path d="M949.69 364.17A37.200 37.200 0 1 1 1004.11 364.17" fill="#fff" stroke="#1a1a1a" stroke-width="1"/><circle cx="976.9" cy="338.8" r="34.700" fill="url(#krffff00)" stroke="#555" stroke-width=".8"/><circle cx="976.9" cy="339.1" r="28" fill="#ffff00" stroke="#808000" stroke-width="2"/><path d="M971.6 316L975.4 331.6" stroke="#ece4c0" stroke-width="1.900" stroke-linecap="round"/><path d="M945.6 369.6L952.3 363.8M1008.1999999999999 369.6L1001.5 363.8" stroke="#000" stroke-width="1.100"/></svg>
<div class="grp" style="left:857px;top:420px;width:168px;height:241px;"></div>
<div class="t song grplabel" style="left:864px;top:413px;line-height:14px">触发</div>
<div class="t song" style="left:860px;top:439px;line-height:14px">触发模式</div>
<div class="combo dis" style="left:947px;top:435px;width:68px;height:21px;"></div>
<div class="t" style="left:951px;top:439px;line-height:14px;font-size:11px;color:#8a8a8a"><span class="song" style="position:static">边沿</span></div>
<div class="arrow dis" style="left:1002px;top:444px"></div>
<div class="t song" style="left:860px;top:469px;line-height:14px">触发方式</div>
<div class="combo dis" style="left:947px;top:465px;width:68px;height:21px;"></div>
<div class="t" style="left:951px;top:469px;line-height:14px;font-size:11px;color:#8a8a8a"><span class="song" style="position:static">自动</span></div>
<div class="arrow dis" style="left:1002px;top:474px"></div>
<div class="t song" style="left:860px;top:499px;line-height:14px">触发信源</div>
<div class="combo dis" style="left:947px;top:495px;width:68px;height:21px;"></div>
<div class="t" style="left:951px;top:499px;line-height:14px;font-size:11px;color:#8a8a8a">CH1</div>
<div class="arrow dis" style="left:1002px;top:504px"></div>
<div class="t song" style="left:860px;top:530px;line-height:14px">边沿类型</div>
<div class="combo" style="left:948px;top:526px;width:68px;height:21px;"></div>
<div class="t" style="left:952px;top:530px;line-height:14px;font-size:10px;color:#000">+</div>
<div class="arrow" style="left:1003px;top:535px"></div>
<div class="grp" style="left:853px;top:700px;width:166px;height:40px;border-bottom:none"></div>
<div class="t song grplabel" style="left:859px;top:693px;line-height:14px">波形移动</div>
<div class="t song" style="left:854px;top:713px;line-height:14px;color:#8c8c8c">数据长度</div>
<div style="left:941px;top:707px;width:68px;height:19px;border:1px solid #a9adb0;border-right-color:#e6e6e6;border-bottom-color:#f4f4f4;background:#f0f0f0;box-shadow:1px 1px 0 #fff"></div>
<div class="t" style="left:941px;top:710px;width:68px;text-align:center;line-height:14px;color:#a2a2a2;font-size:11px">4096</div>
<div style="left:8px;top:733px;width:1035px;height:19px;background:#f0eded;border-top:1px solid #9c9c9c"></div>
<div style="left:8px;top:751px;width:1035px;height:1px;background:#fbfbfb"></div>
<div class="t ui" style="left:10px;top:736px;line-height:16px">模拟</div>
<div style="left:915px;top:735px;width:1px;height:16px;background:#c6c5c5"></div>
<div style="left:916px;top:735px;width:1px;height:16px;background:#fff"></div>
<div style="left:921px;top:735px;width:102px;height:17px;overflow:hidden"><div class="t ui" style="left:0;top:1px;line-height:16px;font-size:12.500px;letter-spacing:.25px;white-space:pre">19-02-2016  11:25</div></div>
<svg style="left:1032.500px;top:740.500px" width="11" height="11" viewBox="0 0 11 11"><g fill="#c2bebe"><rect x="8" y="0" width="2" height="2"/><rect x="4" y="4" width="2" height="2"/><rect x="8" y="4" width="2" height="2"/><rect x="0" y="8" width="2" height="2"/><rect x="4" y="8" width="2" height="2"/><rect x="8" y="8" width="2" height="2"/></g></svg>
</body></html>
